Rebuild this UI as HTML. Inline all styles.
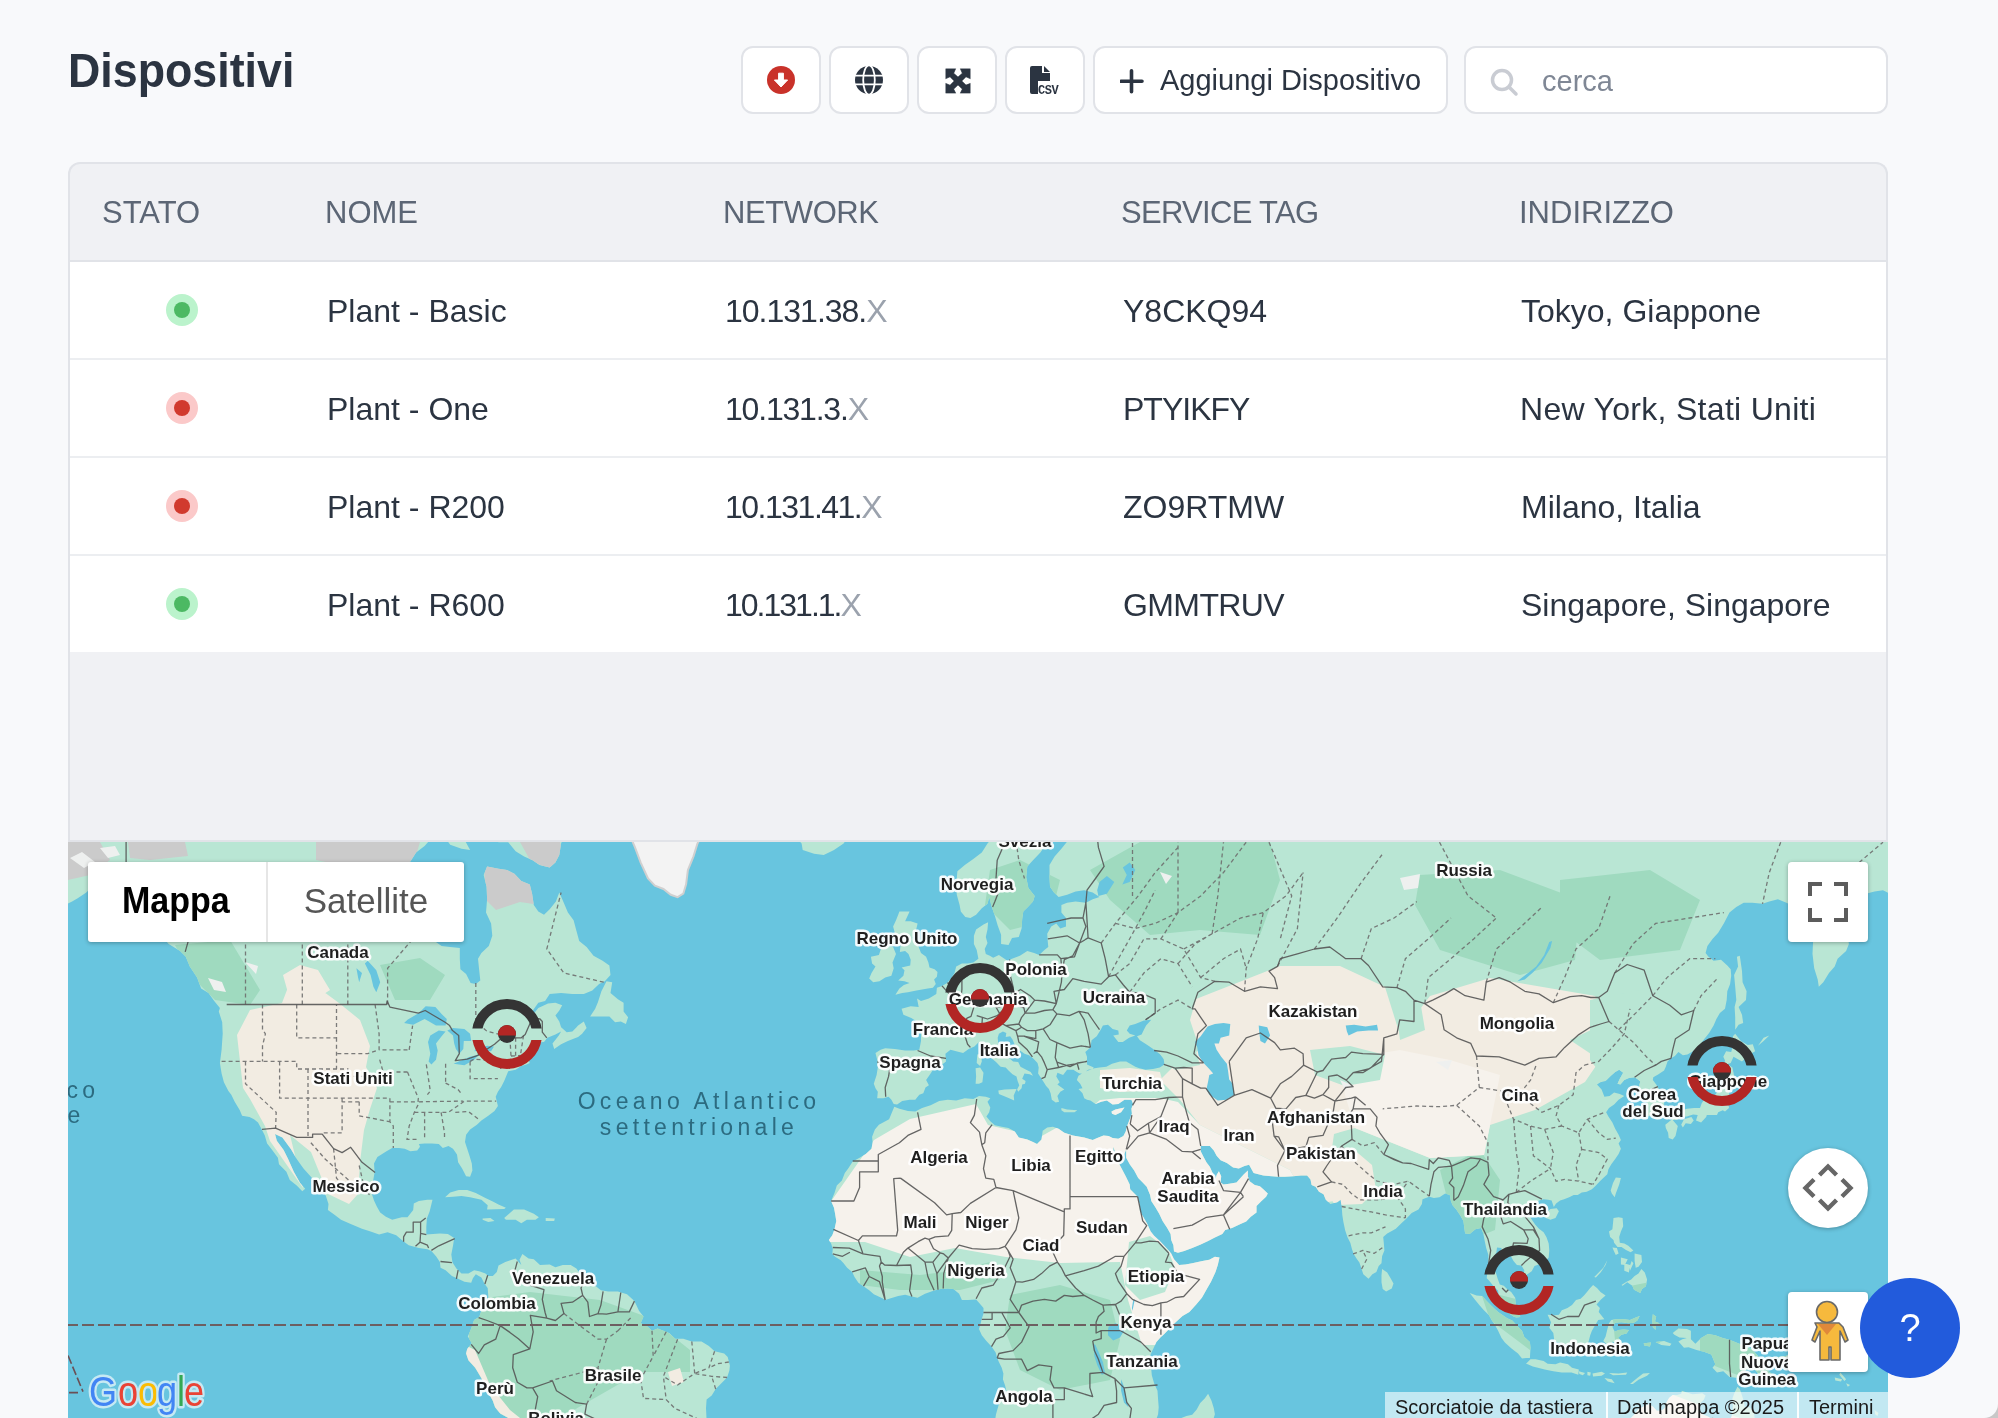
<!DOCTYPE html>
<html><head><meta charset="utf-8">
<style>
*{box-sizing:border-box}
html,body{margin:0;padding:0}
body{width:1998px;height:1418px;overflow:hidden;position:relative;will-change:transform;background:#f8f9fb;font-family:"Liberation Sans",sans-serif;color:#2b3441}
.abs{position:absolute}
.title{left:68px;top:40px;font-size:48.4px;font-weight:bold;line-height:60px;transform:scaleX(0.925);transform-origin:0 0;color:#2b3441;letter-spacing:0px}
.btn{position:absolute;top:46px;height:68px;background:#fff;border:2px solid #e1e3e8;border-radius:12px}
.ib{width:80px}
.ib svg{position:absolute;left:50%;top:50%;transform:translate(-50%,-50%)}
.add{left:1093px;width:355px}
.add span{position:absolute;left:65px;top:16px;font-size:29px;line-height:32px;color:#2b3441}
.search{left:1464px;width:424px}
.search span{position:absolute;left:76px;top:17px;font-size:29px;line-height:32px;color:#7f8795}
.tbl{position:absolute;left:68px;top:162px;width:1820px;height:680px;background:#f0f1f4;border:2px solid #e1e3e8;border-bottom:none;border-radius:12px 12px 0 0;overflow:hidden}
.th{position:absolute;top:0;left:0;right:0;height:98px;border-bottom:2px solid #e1e3e8}
.th span{position:absolute;top:31px;font-size:31px;line-height:36px;color:#5c6675}
.row{position:absolute;left:0;right:0;height:98px;background:#fff;border-bottom:2px solid #eceef1}
.row span{position:absolute;top:30px;font-size:32px;line-height:38px;color:#2b3441}
.row span i{font-style:normal;color:#9ba2ad}
.dot{position:absolute;left:96px;top:32px;width:32px;height:32px;border-radius:50%}
.dot b{position:absolute;left:8px;top:8px;width:16px;height:16px;border-radius:50%}
.g{background:#bbf3cc}.g b{background:#4cb963}
.r{background:#fbc9c9}.r b{background:#d13a2e}
.tblbot{position:absolute;left:68px;top:840px;width:1820px;height:2px;background:#e1e3e8}
.map{position:absolute;left:68px;top:842px;width:1820px;height:576px;overflow:hidden;background:#68c5df;will-change:transform}
.mtype{left:88px;top:862px;width:376px;height:80px;background:#fff;border-radius:3px;box-shadow:0 1px 4px rgba(0,0,0,.3);overflow:hidden}
.mt1{position:absolute;left:34px;top:0;height:80px;font-size:36px;font-weight:bold;color:#000;line-height:77px;transform:scaleX(0.945);transform-origin:0 0;white-space:nowrap}
.mt2{position:absolute;left:178px;top:0;width:198px;height:80px;font-size:35px;color:#565656;text-align:center;line-height:78px;border-left:2px solid #e6e6e6}
.fs{left:1788px;top:862px;width:80px;height:80px;background:#fff;border-radius:4px;box-shadow:0 1px 4px rgba(0,0,0,.3)}
.pan{left:1788px;top:1148px;width:80px;height:80px;background:#fff;border-radius:50%;box-shadow:0 1px 4px rgba(0,0,0,.3)}
.peg{left:1788px;top:1292px;width:80px;height:80px;background:#fff;border-radius:4px;box-shadow:0 1px 4px rgba(0,0,0,.3)}
.help{left:1860px;top:1278px;width:100px;height:100px;border-radius:50%;background:#225bdc;color:#fff;font-size:38px;text-align:center;line-height:100px}
.foot{left:1385px;top:1392px;width:503px;height:26px;background:rgba(255,255,255,.6)}
.foot span{position:absolute;top:3px;font-size:20px;line-height:24px;color:#1a1a1a;white-space:nowrap}
.foot i{position:absolute;top:0;width:2px;height:26px;background:rgba(255,255,255,.9)}
.glogo{left:80px;top:1370px;width:130px;height:48px}
</style></head>
<body>
<div class="abs title">Dispositivi</div>

<div class="btn ib" style="left:741px"><svg width="30" height="30" viewBox="0 0 30 30"><circle cx="15" cy="15" r="14" fill="#c9322a"/><path d="M12.6 8.2h4.8v6.8h4.2L15 22l-6.6-7h4.2z" fill="#fff" stroke="#fff" stroke-width="1" stroke-linejoin="round"/></svg></div>
<div class="btn ib" style="left:829px"><svg width="30" height="30" viewBox="0 0 30 30" style="margin-top:0"><circle cx="15" cy="15" r="14" fill="#2b3441"/><g fill="none" stroke="#fff" stroke-width="1.8"><path d="M0 10.6h30M0 19.4h30"/><ellipse cx="15" cy="15" rx="5.8" ry="14.6"/></g></svg></div>
<div class="btn ib" style="left:917px"><svg width="25" height="25" viewBox="0 0 24.4 24.2" style="margin-left:0.5px;margin-top:0.5px"><path d="M0 0H10L8 4.5L12.2 8.3L16.4 4.5L14.4 0H24.4V10L20 8L15.9 12.1L20 16.1L24.4 14.4V24.1H14.4L16.4 20L12.2 15.9L8 20L10 24.1H0V14.4L4.4 16.2L8.5 12.1L4.4 8L0 10Z" fill="#2b3441" stroke="#2b3441" stroke-width="0.6" stroke-linejoin="round"/></svg></div>
<div class="btn ib" style="left:1005px"><svg width="32" height="30" viewBox="0 0 32 30"><path d="M1 3a2 2 0 0 1 2-2h10v7h8v8H9v13H3a2 2 0 0 1-2-2z" fill="#2b3441"/><path d="M15 1l6 6h-6z" fill="#2b3441"/><text x="9" y="29" font-family="Liberation Mono" font-weight="bold" font-size="12" fill="#2b3441" letter-spacing="-0.5">CSV</text></svg></div>

<div class="btn add"><svg class="abs" style="left:25px;top:21px" width="25" height="25" viewBox="0 0 25 25"><path d="M11.5 1.8v21M1 12.3h21" stroke="#2b3441" stroke-width="3.6" stroke-linecap="round"/></svg><span>Aggiungi Dispositivo</span></div>
<div class="btn search"><svg class="abs" style="left:22px;top:18px" width="32" height="32" viewBox="0 0 32 32"><circle cx="14" cy="14" r="9.5" fill="none" stroke="#c9ccd3" stroke-width="3.5"/><path d="M21 21l7 7" stroke="#c9ccd3" stroke-width="3.5" stroke-linecap="round"/></svg><span>cerca</span></div>

<div class="tbl">
  <div class="th">
    <span style="left:32px">STATO</span>
    <span style="left:255px">NOME</span>
    <span style="left:653px;letter-spacing:-0.4px">NETWORK</span>
    <span style="left:1051px;letter-spacing:-0.7px">SERVICE TAG</span>
    <span style="left:1449px">INDIRIZZO</span>
  </div>
  <div class="row" style="top:98px"><div class="dot g"><b></b></div><span style="left:257px">Plant - Basic</span><span style="left:655px;letter-spacing:-1px">10.131.38.<i>X</i></span><span style="left:1053px">Y8CKQ94</span><span style="left:1451px">Tokyo, Giappone</span></div>
  <div class="row" style="top:196px"><div class="dot r"><b></b></div><span style="left:257px">Plant - One</span><span style="left:655px;letter-spacing:-1.2px">10.131.3.<i>X</i></span><span style="left:1053px;letter-spacing:-1px">PTYIKFY</span><span style="left:1450px;letter-spacing:0.3px">New York, Stati Uniti</span></div>
  <div class="row" style="top:294px"><div class="dot r"><b></b></div><span style="left:257px">Plant - R200</span><span style="left:655px;letter-spacing:-1.5px">10.131.41.<i>X</i></span><span style="left:1053px">ZO9RTMW</span><span style="left:1451px">Milano, Italia</span></div>
  <div class="row" style="top:392px;height:96px;border-bottom:none"><div class="dot g"><b></b></div><span style="left:257px">Plant - R600</span><span style="left:655px;letter-spacing:-2px">10.131.1.<i>X</i></span><span style="left:1053px;letter-spacing:-0.6px">GMMTRUV</span><span style="left:1451px">Singapore, Singapore</span></div>
</div>
<div class="tblbot"></div>

<div class="map" id="map">
<!--MAP--><svg width="1820" height="576" viewBox="0 0 1820 576" style="position:absolute;left:0;top:0;display:block">
<defs><clipPath id="lc"><path d="M-50.0 -82.4L-50.0 48.2L-1.6 44.7L-3.3 62.9L4.1 59.6L9.7 56.2L18.3 50.5L24.0 44.7L32.5 49.4L41.0 53.9L55.2 56.2L66.6 58.5L75.1 66.2L83.7 73.9L86.5 83.5L93.3 93.8L100.7 102.0L112.1 108.9L117.8 114.8L121.8 124.4L129.1 135.6L133.1 146.6L140.5 151.1L146.2 159.0L151.9 165.9L150.8 169.4L154.2 180.3L154.7 191.8L153.6 207.8L151.9 220.9L153.6 231.5L155.9 240.3L160.4 249.1L163.3 252.7L166.7 259.8L171.8 268.2L174.1 273.8L181.5 275.1L186.0 277.2L190.0 280.6L193.4 286.7L196.8 293.4L199.1 301.4L203.6 307.3L209.9 315.8L211.0 322.2L218.4 329.8L221.8 338.0L228.7 343.6L234.3 349.2L237.2 346.7L232.1 341.1L225.8 329.8L220.1 317.0L215.6 308.0L208.8 298.8L207.0 292.1L214.4 295.4L223.0 307.3L228.7 317.0L235.5 326.6L242.9 334.8L250.3 343.6L257.7 353.5L260.5 362.0L259.9 368.1L266.8 372.9L273.0 377.7L282.7 381.9L294.0 386.7L302.6 389.6L311.1 392.6L319.6 390.2L328.2 393.2L335.0 399.1L340.7 403.2L350.9 406.1L359.4 407.3L363.4 409.0L368.0 414.3L371.9 420.1L372.5 425.8L377.6 428.2L383.9 433.9L389.0 436.2L396.4 439.7L403.2 440.8L404.9 436.2L407.8 432.2L413.4 435.6L416.3 441.4L419.7 446.0L420.3 454.5L419.1 461.4L413.4 468.8L411.2 475.0L406.1 477.9L404.4 483.0L402.6 488.1L399.8 494.4L403.8 501.2L399.2 506.9L398.1 511.5L400.4 518.3L407.2 525.8L411.7 533.2L416.3 541.3L420.3 550.6L424.8 558.7L427.1 565.2L432.2 571.6L439.0 575.2L444.7 578.7L450.4 599.1L638.0 599.1L638.6 578.1L638.0 566.3L638.6 557.6L643.7 553.5L647.7 547.1L653.4 541.3L659.1 535.5L661.4 528.6L661.9 523.5L659.7 514.9L656.2 511.5L646.6 509.2L640.9 504.1L633.5 499.5L623.8 499.5L615.3 496.7L607.3 496.7L601.1 491.0L589.7 486.4L584.0 488.7L578.3 483.6L572.7 481.3L575.5 474.5L571.0 468.8L566.4 459.1L559.0 452.2L549.9 449.4L540.2 449.4L532.9 448.2L527.2 443.7L519.2 435.6L513.0 433.3L508.4 426.4L502.7 423.0L494.8 423.0L487.4 425.3L481.7 422.4L472.0 423.0L465.8 417.2L460.6 416.6L454.4 411.9L451.5 417.7L453.3 423.0L447.6 416.6L442.4 418.3L437.3 420.1L430.5 423.5L428.8 429.9L424.8 433.9L420.3 433.9L417.4 431.6L411.2 429.3L406.1 428.2L400.4 431.6L393.5 431.6L388.4 426.4L384.5 420.6L383.3 412.5L385.0 403.8L386.2 396.1L379.9 392.0L371.9 391.4L365.1 392.0L358.3 392.6L358.3 384.9L358.9 376.5L361.7 369.3L364.5 357.8L359.4 357.8L350.9 359.0L345.8 361.4L345.2 368.1L339.5 375.3L333.8 375.3L324.2 377.7L317.9 374.7L312.2 370.5L308.8 364.5L306.0 358.4L303.7 351.6L304.8 340.5L306.6 330.4L306.0 321.5L309.4 315.1L318.5 309.3L324.2 306.0L331.0 306.0L336.7 306.7L342.4 309.3L349.2 308.6L352.0 304.7L350.9 302.1L356.6 301.4L364.0 301.4L370.8 302.1L374.8 306.0L380.5 304.0L385.0 306.7L389.0 312.5L390.1 320.3L394.1 326.6L398.1 334.2L402.1 334.8L404.4 328.5L403.8 321.5L401.5 313.8L399.2 306.7L397.0 300.1L398.1 292.8L402.1 287.4L408.9 282.7L413.4 278.6L420.3 273.8L426.5 268.9L429.9 264.0L427.7 254.8L429.9 249.8L433.3 244.7L436.2 238.9L439.0 232.2L440.2 229.2L447.6 227.7L453.3 223.9L458.4 222.4L461.8 220.9L458.4 214.8L457.2 210.1L461.8 205.4L468.6 200.6L476.0 199.9L479.4 195.8L487.4 192.6L493.1 189.4L490.8 193.4L484.5 201.4L486.2 207.0L493.1 202.2L499.9 199.1L510.1 195.0L514.1 191.8L518.6 186.1L515.8 179.5L510.1 183.6L504.4 189.4L498.7 190.2L493.1 185.3L491.3 179.5L487.4 173.6L491.3 168.5L494.2 163.3L487.4 160.7L480.0 161.6L470.3 165.9L462.9 175.3L458.9 177.0L464.1 169.4L470.3 160.7L477.1 159.0L481.7 151.9L493.1 151.1L504.4 151.9L515.8 151.9L524.3 148.4L531.1 142.1L536.8 139.3L542.5 132.9L541.4 123.5L534.6 118.7L525.5 113.8L518.6 105.0L511.2 98.9L508.4 88.7L505.6 78.2L499.9 70.6L494.8 58.5L491.3 50.5L487.9 59.6L481.7 67.3L476.0 72.8L470.3 69.5L465.8 62.9L464.1 51.7L461.8 42.4L453.3 38.9L446.4 31.7L439.0 28.0L430.5 26.8L419.1 24.4L415.7 32.9L418.6 44.7L419.1 57.3L418.0 70.6L423.1 81.4L424.3 93.8L420.8 104.0L413.4 110.9L410.0 116.7L411.2 128.2L412.3 138.4L407.8 142.1L402.6 141.1L398.1 131.9L392.4 127.2L391.8 116.7L391.8 106.0L382.2 105.0L373.6 104.0L365.1 97.9L356.6 91.8L348.1 86.6L339.5 85.6L332.7 86.6L328.2 74.9L323.6 67.3L321.9 53.9L323.6 40.0L329.3 30.5L335.6 23.1L342.4 19.4L348.1 10.6L356.6 4.1L362.3 -2.5L368.0 -21.5L370.8 -82.4ZM507.3 -82.4L510.1 -28.6L504.4 -16.0L497.0 -7.8L493.1 1.5L491.3 13.1L487.4 20.6L481.7 25.6L471.4 23.1L464.6 18.2L456.1 14.4L447.6 9.3L440.2 0.2L430.5 0.2L422.0 -5.1L415.2 -7.8L413.4 -21.5L410.6 -82.4ZM368.0 -21.5L373.6 -9.2L382.2 2.8L393.5 6.7L402.1 8.0L396.4 -2.5L387.9 -18.7L382.2 -21.5ZM721.6 -21.5L731.9 -11.9L726.2 -6.5L733.6 1.5L734.7 8.0L746.1 11.8L755.7 13.1L766.0 8.0L775.6 1.5L782.5 -7.8L781.3 -16.0L780.2 -21.5ZM522.1 174.4L527.2 166.8L530.0 159.9L533.4 149.3L538.5 139.3L544.2 140.2L542.5 151.1L549.9 157.2L555.6 160.7L555.6 169.4L560.1 175.3L557.9 182.0L552.8 179.5L547.1 180.3L541.4 174.4L532.9 174.4L525.5 174.4ZM377.1 355.3L382.2 350.4L390.7 347.9L399.2 347.9L407.8 351.0L417.4 355.9L424.8 359.6L430.5 362.6L437.9 365.7L436.2 366.9L419.1 367.5L419.7 363.3L413.4 357.8L402.1 355.3L393.5 354.1L385.0 354.7ZM436.2 375.9L445.9 367.5L456.1 367.5L465.8 371.7L470.9 375.3L467.5 377.7L458.9 377.7L453.3 381.3L447.6 377.7L437.9 377.7ZM414.6 376.5L422.5 375.9L426.5 378.9L420.3 380.1L414.6 377.7ZM477.7 375.9L486.8 376.5L486.2 378.9L477.7 378.9ZM928.0 -82.4L936.6 -21.5L932.6 -14.6L925.2 -5.1L919.5 1.5L913.8 10.6L905.3 16.9L896.8 23.1L889.4 29.3L888.2 42.4L888.8 52.8L891.6 62.9L892.8 69.5L897.3 74.9L902.4 76.0L908.1 72.8L913.8 66.2L919.5 61.8L921.2 55.1L923.5 64.0L926.9 73.9L929.7 83.5L933.1 92.8L933.1 102.0L940.5 103.0L944.0 95.9L950.8 94.9L953.6 86.6L954.2 77.1L955.3 69.5L959.9 65.1L965.0 59.6L966.7 53.9L960.4 45.9L958.2 35.3L959.3 24.4L965.0 18.2L972.4 10.6L978.6 1.5L982.0 -6.5L984.9 -14.6L993.4 -18.7L1000.8 -16.0L1003.7 -7.8L1000.8 -2.5L993.4 6.7L986.6 14.4L981.5 23.1L981.5 35.3L982.0 44.7L986.0 50.5L990.6 55.1L999.1 52.8L1007.6 49.4L1016.2 48.2L1024.7 50.5L1031.5 55.1L1024.7 57.3L1017.9 60.7L1007.6 59.6L999.1 60.7L993.4 62.9L993.4 70.6L998.0 76.0L998.0 84.5L992.3 86.6L988.3 81.4L983.2 84.5L979.2 91.8L979.8 99.9L980.3 105.0L976.4 107.9L971.2 112.9L966.1 110.9L959.3 108.9L951.9 113.8L944.0 116.7L939.4 118.7L930.9 112.9L925.2 115.8L921.8 113.8L917.8 111.9L916.7 107.0L919.5 101.0L917.8 94.9L919.5 87.6L920.1 80.3L915.5 82.4L908.1 87.6L905.9 93.8L905.9 102.0L908.7 107.9L910.4 116.7L905.3 120.6L899.6 121.6L893.9 121.6L888.2 124.4L886.5 131.0L883.1 136.6L879.1 141.1L874.0 143.9L868.9 145.7L868.3 151.9L860.9 156.4L853.0 159.0L849.0 156.4L850.7 165.1L842.7 164.2L833.6 166.8L835.4 172.8L843.3 176.1L847.3 178.6L849.6 183.6L853.0 189.4L853.0 199.1L851.3 207.8L845.6 208.5L837.1 208.5L826.8 207.0L817.2 206.2L812.6 207.8L807.5 210.9L809.2 217.8L809.8 225.5L808.6 233.0L805.8 241.8L807.5 246.2L809.8 249.8L809.2 256.2L815.4 256.2L820.6 254.8L823.4 257.7L825.7 261.9L829.1 262.6L834.2 259.1L841.6 257.7L847.3 257.7L851.3 252.7L855.3 251.2L857.5 245.5L860.9 243.3L858.1 238.1L862.1 232.2L865.5 227.0L872.3 223.9L878.0 219.4L877.4 211.7L882.5 207.8L888.2 209.3L895.1 210.9L900.7 207.0L906.4 204.6L910.4 200.6L915.5 203.0L918.4 207.8L920.1 212.4L923.5 216.3L928.0 220.1L932.6 224.7L937.7 225.5L940.5 228.5L944.5 232.2L948.5 234.4L949.6 238.9L951.3 243.3L949.1 247.6L950.2 249.8L953.6 246.2L954.2 242.5L957.0 241.8L957.6 238.9L954.2 236.7L956.5 231.5L961.6 232.2L965.0 233.7L962.7 230.0L958.2 227.7L952.5 224.7L950.2 220.1L945.1 219.4L940.5 215.5L937.1 207.8L930.3 202.2L929.7 195.8L930.9 191.8L934.9 189.4L938.3 191.0L937.7 195.0L942.2 194.2L944.5 197.5L946.8 203.0L950.8 207.8L956.5 211.7L961.0 213.2L965.0 216.3L969.5 220.9L970.7 225.5L970.1 231.5L973.5 236.7L975.8 240.3L978.1 244.0L980.9 246.9L982.6 251.2L983.8 257.7L987.7 260.5L991.1 259.8L989.4 254.1L992.3 249.8L996.3 247.6L989.4 242.5L991.7 240.3L988.3 234.4L989.4 230.7L995.1 233.0L999.1 227.7L1005.4 227.7L1008.8 230.0L1011.6 231.5L1015.0 231.5L1020.1 227.7L1024.7 227.0L1025.8 225.5L1019.0 222.4L1019.0 214.8L1017.3 210.1L1022.4 205.4L1023.6 198.3L1028.7 194.2L1032.7 187.7L1034.9 183.6L1040.0 182.8L1044.6 186.9L1050.3 188.6L1050.8 192.6L1045.2 193.4L1050.3 199.9L1054.8 199.9L1061.1 195.8L1067.3 193.4L1061.7 191.8L1058.8 188.6L1061.7 183.6L1067.3 182.0L1075.9 178.6L1083.3 177.8L1078.1 183.6L1075.9 187.7L1073.6 192.6L1069.0 194.2L1071.9 198.3L1077.0 201.4L1081.6 204.6L1087.2 208.5L1092.4 212.4L1095.8 217.1L1096.3 222.4L1091.8 225.5L1085.0 227.0L1077.6 227.7L1071.3 226.2L1067.3 224.7L1062.2 221.7L1058.2 219.4L1052.0 219.4L1044.0 221.7L1038.3 224.7L1031.5 225.5L1026.4 226.2L1016.2 230.0L1010.5 233.7L1008.8 238.1L1012.2 241.8L1014.5 246.2L1010.5 246.9L1014.5 251.2L1016.2 256.2L1019.0 257.7L1022.4 258.4L1027.5 261.9L1033.2 259.8L1038.9 258.4L1044.6 262.6L1050.3 261.9L1056.5 257.7L1063.4 257.7L1065.1 261.9L1063.4 266.8L1063.9 271.7L1061.7 277.2L1059.4 283.3L1057.7 289.4L1055.4 294.1L1050.3 296.8L1044.6 296.1L1040.6 294.1L1035.5 293.4L1029.2 296.1L1024.7 298.1L1016.2 295.4L1004.8 293.4L996.3 290.8L990.6 286.7L984.9 284.7L979.2 285.4L974.7 288.8L973.5 297.4L969.0 302.1L965.0 300.1L959.3 297.4L950.8 295.4L946.8 289.4L940.5 286.1L933.7 284.7L926.9 283.3L922.3 279.3L918.4 274.5L921.2 270.3L922.3 265.4L919.5 259.8L922.3 256.2L917.8 254.8L911.0 254.1L905.3 257.0L896.8 256.2L888.2 258.4L879.7 257.7L871.2 259.1L862.6 263.3L854.1 266.1L847.3 269.6L839.9 268.9L831.4 266.8L826.3 264.7L824.0 270.3L821.1 277.2L816.0 279.9L810.9 282.7L806.9 287.4L804.1 294.8L804.6 300.7L803.5 306.7L797.8 311.9L791.6 315.8L784.7 319.6L780.2 326.6L776.8 331.1L773.9 338.6L768.8 343.6L766.5 351.0L763.1 359.0L766.0 365.7L767.1 371.7L768.3 378.9L766.5 387.3L764.3 393.2L760.9 397.9L763.1 401.4L764.8 406.7L764.3 411.9L767.1 414.8L772.8 418.3L775.6 421.2L779.1 425.8L784.2 429.9L786.5 435.1L790.4 440.8L795.5 444.2L801.2 448.2L805.8 452.2L814.3 456.2L817.2 458.0L822.8 456.2L830.2 454.0L837.1 452.8L843.9 454.5L849.6 455.7L857.0 451.7L865.5 448.8L872.3 447.1L879.7 446.5L885.4 447.1L891.1 451.7L893.9 458.0L899.6 458.0L908.1 457.4L911.0 460.8L915.5 465.9L915.5 471.6L913.8 476.7L912.7 481.3L911.0 487.0L913.8 493.2L918.4 498.9L923.5 504.6L927.5 510.3L929.2 516.0L930.9 520.0L933.7 525.8L935.4 531.5L934.9 537.3L937.1 543.6L938.3 548.8L936.6 554.6L931.4 560.5L929.7 566.3L928.0 572.2L926.9 579.3L925.2 599.1L1087.2 599.1L1082.7 581.1L1088.4 577.0L1090.1 572.2L1090.7 565.2L1090.1 557.6L1089.5 548.8L1086.1 541.3L1083.8 533.2L1083.3 527.5L1081.0 520.6L1081.6 514.9L1083.3 510.9L1085.5 506.3L1088.4 500.1L1092.4 495.5L1096.3 492.1L1101.5 486.4L1107.1 480.7L1114.5 473.9L1121.4 469.9L1128.2 462.5L1133.9 455.7L1138.4 447.7L1143.0 439.7L1147.5 429.9L1149.8 423.0L1151.5 415.4L1146.9 414.8L1141.3 417.7L1134.4 418.9L1124.2 421.2L1117.4 422.4L1111.1 423.0L1106.0 417.2L1103.2 411.4L1100.3 407.9L1096.3 403.8L1091.8 399.1L1086.1 393.8L1082.7 389.6L1079.3 381.9L1075.9 375.9L1071.9 369.3L1071.3 361.4L1069.6 354.7L1062.2 347.3L1061.7 342.4L1057.7 334.2L1053.1 325.4L1050.3 320.3L1045.7 313.8L1045.2 304.7L1048.6 313.8L1053.1 319.0L1055.4 315.1L1058.2 307.3L1058.2 315.8L1061.7 322.2L1066.2 328.5L1070.2 336.1L1074.7 340.5L1078.7 344.8L1082.1 352.9L1083.3 359.0L1087.2 365.1L1091.2 371.7L1094.6 378.9L1099.2 386.1L1102.6 392.0L1103.2 397.9L1105.4 403.2L1106.0 409.6L1110.0 410.8L1116.2 409.0L1124.2 406.1L1132.7 402.6L1140.1 399.1L1146.9 395.5L1154.3 392.0L1157.2 387.9L1164.0 386.1L1172.5 381.9L1178.2 379.5L1182.8 374.7L1188.5 370.5L1188.5 363.9L1193.0 359.6L1198.1 354.7L1199.8 351.6L1195.3 347.3L1191.9 344.2L1186.7 343.0L1181.6 339.2L1179.9 334.2L1179.9 328.5L1175.9 332.3L1172.5 336.1L1168.5 340.5L1161.2 341.7L1155.5 342.4L1152.6 340.5L1153.2 334.2L1150.9 329.2L1148.6 333.0L1147.5 337.4L1144.1 329.8L1141.8 324.7L1138.4 320.3L1135.6 315.1L1132.7 309.3L1132.7 304.0L1136.7 304.0L1141.8 304.0L1145.8 308.6L1148.6 313.8L1152.6 318.3L1158.9 320.9L1165.1 325.4L1170.8 326.6L1176.5 324.1L1181.1 322.8L1185.6 331.1L1195.3 333.6L1203.8 334.2L1210.1 334.8L1216.9 334.8L1225.4 334.2L1232.8 333.6L1239.1 333.6L1242.5 337.4L1243.6 343.0L1247.6 344.8L1251.0 349.8L1255.5 352.3L1257.8 357.8L1262.4 362.0L1269.2 360.2L1272.6 357.8L1273.7 364.5L1274.3 372.9L1275.4 380.1L1277.2 388.4L1279.4 394.9L1282.3 400.8L1284.0 407.3L1285.7 411.9L1288.5 416.6L1291.4 420.6L1293.6 427.0L1295.3 432.2L1300.5 436.8L1304.4 432.2L1308.4 429.9L1310.7 424.1L1313.5 421.2L1314.1 414.3L1316.4 408.4L1315.8 400.8L1315.2 394.9L1319.2 391.4L1323.8 389.0L1327.8 386.7L1333.4 381.3L1338.0 377.1L1343.7 371.1L1350.5 367.5L1353.9 362.0L1354.5 357.2L1361.3 354.7L1365.9 355.9L1371.5 355.3L1377.2 351.6L1381.8 352.9L1382.9 359.0L1384.6 363.3L1388.6 368.1L1392.0 372.9L1395.4 378.9L1396.6 387.9L1397.1 391.4L1401.7 392.0L1407.4 387.3L1413.0 386.1L1415.3 391.4L1416.5 397.9L1418.2 406.1L1420.4 413.1L1420.4 423.0L1419.3 430.5L1418.7 436.2L1421.0 438.5L1425.6 444.2L1430.1 448.8L1430.7 454.5L1432.9 461.4L1435.8 467.1L1439.8 470.5L1445.5 474.5L1448.3 475.6L1452.3 475.0L1450.6 468.8L1447.7 462.5L1447.2 455.7L1443.2 450.0L1439.8 447.7L1435.8 443.7L1431.8 442.5L1429.5 436.2L1427.8 430.5L1423.9 427.0L1423.9 420.6L1425.6 415.4L1428.4 410.2L1429.0 405.5L1433.5 406.1L1433.5 410.8L1438.1 410.8L1442.6 413.7L1445.5 418.9L1448.9 423.0L1453.4 423.5L1456.3 428.2L1455.7 433.9L1458.0 433.3L1463.7 429.3L1466.5 424.1L1472.8 421.8L1478.4 418.3L1480.7 415.4L1481.3 408.4L1480.7 401.4L1478.4 394.9L1475.6 390.2L1471.0 386.7L1467.1 382.5L1464.2 378.3L1461.4 374.1L1461.4 369.3L1463.7 365.7L1466.5 362.6L1471.0 358.4L1475.6 357.2L1480.1 357.8L1483.6 358.4L1485.8 365.1L1488.1 361.4L1492.1 358.4L1496.1 357.2L1501.2 355.3L1505.7 352.9L1509.7 352.9L1513.7 350.4L1518.8 349.8L1523.9 347.3L1527.9 343.6L1531.9 339.2L1535.3 336.1L1539.3 332.3L1540.4 327.3L1543.3 322.2L1547.2 317.0L1550.6 311.9L1552.9 306.7L1550.6 301.4L1552.9 298.1L1550.6 292.8L1547.2 286.7L1544.4 280.6L1540.4 274.5L1538.1 270.3L1541.0 266.1L1546.1 262.6L1550.6 257.7L1556.3 254.1L1551.8 252.0L1546.1 250.5L1541.6 254.1L1536.4 254.8L1533.6 247.6L1529.0 242.5L1532.5 240.3L1537.6 238.9L1542.1 234.4L1547.2 230.0L1551.2 227.7L1555.2 230.7L1551.8 236.7L1549.5 241.8L1552.4 242.5L1556.3 238.1L1560.9 235.9L1566.6 235.2L1570.0 237.4L1572.3 239.6L1571.1 244.0L1570.5 249.8L1575.1 251.2L1579.1 252.0L1579.6 256.2L1578.5 261.2L1580.2 266.1L1578.5 272.4L1580.8 274.5L1584.8 272.4L1589.9 271.0L1594.4 268.9L1596.1 264.7L1596.1 258.4L1595.0 252.7L1591.0 246.9L1588.2 242.5L1584.8 238.1L1585.3 235.2L1590.5 232.2L1596.1 228.5L1597.8 224.7L1599.5 219.4L1603.0 216.3L1606.9 214.0L1610.4 210.1L1614.9 213.2L1619.4 212.4L1626.3 208.5L1631.4 203.8L1636.5 196.7L1641.1 191.0L1645.6 183.6L1648.4 177.0L1651.9 171.1L1657.0 166.8L1658.7 158.1L1659.3 149.3L1662.1 142.1L1663.2 133.8L1662.7 127.2L1659.3 123.5L1653.0 117.7L1645.6 118.7L1640.5 114.8L1637.6 110.9L1639.4 104.0L1644.5 96.9L1650.2 90.8L1655.8 81.4L1661.5 70.6L1668.3 65.1L1675.7 60.7L1684.3 60.7L1694.5 61.8L1701.3 59.6L1709.9 57.3L1718.4 60.7L1726.9 65.1L1735.4 62.9L1741.1 59.6L1738.3 51.7L1744.0 44.7L1751.4 36.5L1755.3 32.9L1763.9 32.9L1771.3 40.0L1768.4 47.0L1762.7 56.2L1755.3 70.6L1750.2 78.2L1746.8 86.6L1745.1 98.9L1744.5 111.9L1746.2 126.3L1749.7 137.5L1750.8 144.8L1755.3 140.2L1761.0 131.0L1766.7 124.4L1769.6 116.7L1778.1 108.9L1780.9 102.0L1779.8 94.9L1785.5 89.7L1787.8 81.4L1782.1 76.0L1783.8 70.6L1789.5 61.8L1792.3 55.1L1798.0 51.7L1806.5 49.4L1815.0 48.2L1826.4 53.9L1854.8 53.9L1854.8 -82.4ZM831.4 69.5L841.6 69.5L837.1 79.2L842.7 79.2L849.6 81.4L847.9 88.7L844.4 95.9L848.4 98.9L850.7 105.0L853.0 110.9L858.1 114.8L860.4 120.6L861.5 125.4L866.6 127.2L869.5 130.1L868.9 134.7L866.1 137.5L867.8 142.1L864.9 145.7L859.8 146.6L854.1 147.5L848.4 148.4L839.9 150.2L834.2 151.1L827.4 152.8L831.4 146.6L835.9 143.0L841.6 141.1L836.5 139.3L830.2 138.4L835.4 133.8L836.5 128.2L833.6 125.4L842.2 123.5L842.7 117.7L840.5 111.9L837.1 108.9L831.9 109.9L832.5 103.0L828.0 104.0L828.5 96.9L826.8 90.8L825.1 84.5L828.0 78.2L830.2 72.8ZM825.1 105.0L818.9 104.0L813.2 106.0L810.9 112.9L802.9 114.8L804.1 121.6L807.5 124.4L803.5 131.0L801.2 136.6L805.2 140.2L811.5 139.3L817.2 135.6L823.4 133.8L825.7 126.3L824.5 120.6L828.0 111.9ZM907.6 226.2L912.1 225.5L915.5 230.7L914.4 240.3L911.0 241.8L907.6 241.8L908.1 234.4ZM909.3 212.4L913.2 211.7L913.8 219.4L912.1 223.9L908.7 220.9ZM930.3 248.4L936.6 247.6L948.5 246.9L945.7 253.4L946.2 258.4L941.1 256.2L930.9 252.0ZM993.4 266.1L999.1 267.5L1009.3 268.2L1006.5 270.3L996.3 270.3L993.4 268.2ZM1043.5 269.6L1047.4 267.5L1056.5 265.4L1053.1 270.3L1047.4 273.1L1044.0 271.7ZM1314.1 427.0L1319.2 430.5L1322.6 436.2L1325.5 441.4L1323.8 446.5L1318.1 449.4L1314.7 447.1L1313.5 440.2L1313.5 433.3ZM1655.8 223.2L1662.7 220.9L1665.5 214.8L1674.0 219.4L1681.4 212.4L1687.1 209.3L1684.8 202.2L1679.7 203.0L1672.9 199.1L1667.2 191.8L1664.9 194.2L1664.9 203.8L1663.2 210.1L1658.1 209.3L1655.3 214.8L1657.0 218.6ZM1655.8 225.5L1661.0 223.2L1664.4 225.5L1666.6 235.9L1666.1 243.3L1661.5 246.9L1661.0 254.8L1660.4 261.9L1661.0 266.1L1657.0 269.6L1654.7 268.2L1650.2 270.3L1649.0 273.1L1644.5 273.1L1638.8 273.1L1638.2 275.1L1633.1 280.6L1628.0 278.6L1629.7 273.1L1625.1 272.4L1618.9 274.5L1613.2 275.1L1608.1 277.9L1604.7 277.9L1609.8 284.0L1607.5 294.1L1604.7 297.4L1600.7 296.1L1600.1 290.8L1597.8 286.1L1597.3 282.7L1600.7 279.9L1604.1 277.2L1606.9 274.5L1612.1 268.9L1618.9 266.8L1626.3 266.1L1632.0 266.1L1633.7 261.2L1637.6 255.5L1640.5 257.7L1646.2 254.1L1649.0 250.5L1653.0 246.9L1654.7 240.3L1655.8 234.4L1655.3 230.0ZM1613.2 282.7L1616.0 277.2L1623.4 275.1L1625.7 278.6L1622.9 282.0L1617.7 281.3L1614.9 285.4ZM1667.2 187.7L1670.6 182.8L1675.2 181.1L1674.0 172.8L1670.6 165.1L1678.0 158.1L1678.6 149.3L1674.6 140.2L1674.0 129.1L1671.8 113.8L1668.9 114.8L1670.1 124.4L1666.1 132.9L1667.2 144.8L1668.3 158.1L1666.6 165.1L1667.2 175.3ZM1690.0 203.8L1695.6 199.1L1701.3 193.4L1695.6 195.8ZM1542.7 348.6L1545.0 341.1L1547.8 335.5L1552.9 336.1L1551.2 342.4L1547.8 351.6L1546.7 355.3L1543.8 351.6ZM1477.3 371.7L1482.4 366.9L1488.7 366.3L1490.9 369.3L1487.5 375.9L1482.4 377.7L1477.9 375.9ZM1545.5 375.9L1550.6 375.3L1554.6 375.9L1555.2 384.3L1552.9 389.6L1551.2 394.9L1551.8 400.8L1556.3 401.4L1560.3 403.8L1565.4 408.4L1562.6 410.2L1558.0 407.9L1553.5 404.9L1549.5 404.9L1546.1 400.8L1545.5 397.9L1542.1 394.9L1541.0 389.6L1544.4 387.3L1545.0 381.3ZM1544.4 405.5L1548.9 406.1L1550.6 411.4L1547.8 413.1L1546.1 409.6ZM1566.6 411.4L1573.4 413.1L1574.0 420.1L1570.5 424.7L1567.7 425.8L1566.6 418.9ZM1552.9 415.4L1559.7 417.2L1556.9 423.0L1552.9 422.4ZM1556.3 421.2L1562.0 423.0L1560.9 430.5L1556.3 428.7ZM1563.7 418.9L1565.4 421.2L1562.0 428.7L1561.5 424.7ZM1553.5 443.1L1558.6 439.7L1563.2 437.4L1566.6 433.9L1570.5 431.6L1573.4 427.0L1576.8 430.5L1579.1 437.4L1577.9 444.2L1574.0 447.1L1572.3 451.1L1566.0 447.7L1564.3 443.7L1559.2 440.2L1554.6 443.7ZM1526.2 435.1L1530.7 430.5L1535.3 425.8L1539.3 418.3L1537.6 423.0L1533.0 429.9L1527.9 435.6ZM1479.6 472.8L1483.0 480.2L1481.3 485.8L1485.3 491.0L1486.4 498.9L1490.9 500.6L1495.5 502.9L1502.3 501.2L1510.8 504.6L1518.2 504.6L1520.5 500.1L1522.2 493.2L1523.9 488.7L1527.9 481.9L1530.2 477.9L1536.4 477.3L1530.7 469.9L1531.9 465.9L1528.5 462.5L1533.0 457.4L1537.6 453.4L1532.5 450.0L1529.0 446.0L1525.1 443.1L1522.2 446.0L1519.4 449.4L1516.0 453.4L1512.6 456.8L1508.0 458.0L1504.0 463.1L1499.5 465.9L1493.8 468.2L1490.9 472.8L1486.4 473.3ZM1401.7 451.1L1408.5 453.4L1414.2 454.0L1418.7 459.1L1423.9 464.2L1430.1 469.9L1434.1 472.8L1439.2 476.2L1444.3 478.5L1448.9 483.6L1454.0 488.7L1456.3 494.9L1461.9 500.1L1462.5 505.8L1461.9 516.0L1458.0 516.0L1454.0 516.6L1450.0 511.5L1443.2 506.3L1436.9 500.6L1433.5 496.1L1430.1 488.7L1426.7 482.4L1423.9 478.5L1421.0 473.3L1415.9 468.2L1411.3 463.1L1406.8 457.4ZM1458.0 521.8L1462.5 517.2L1467.6 517.2L1475.6 518.9L1479.6 521.8L1487.5 522.3L1492.1 520.6L1500.0 522.3L1504.0 525.8L1510.8 527.5L1510.3 532.7L1503.5 530.4L1493.8 530.4L1485.3 529.2L1476.7 527.5L1469.9 525.8L1464.8 524.6L1459.7 522.3ZM1510.8 529.2L1517.1 530.9L1514.8 533.2L1511.4 532.1ZM1519.4 529.8L1522.8 530.4L1522.2 533.8L1519.4 533.2ZM1524.5 531.5L1533.6 529.8L1537.0 531.5L1533.6 533.8L1525.1 534.4ZM1541.0 530.9L1550.6 531.5L1559.2 530.4L1558.0 532.7L1545.0 533.2ZM1536.4 536.1L1543.8 537.3L1546.7 541.3L1539.8 539.6ZM1562.0 541.9L1567.7 537.3L1575.1 531.5L1581.9 530.9L1579.1 533.8L1570.5 537.8L1564.9 541.9ZM1538.7 514.3L1539.8 507.5L1538.7 502.3L1535.3 498.9L1537.6 494.4L1539.3 487.5L1541.0 481.3L1543.3 477.9L1547.8 477.3L1556.3 477.3L1562.0 477.9L1567.7 475.6L1571.7 473.9L1569.4 478.5L1566.0 480.7L1560.3 481.3L1553.5 480.2L1547.2 480.7L1544.4 484.7L1546.7 489.8L1550.6 488.1L1555.8 487.5L1560.9 488.1L1558.6 491.5L1553.5 492.7L1550.1 495.5L1553.5 500.1L1556.3 504.6L1559.7 507.5L1556.9 510.9L1552.4 510.3L1550.6 506.9L1547.8 501.2L1544.4 499.5L1544.4 505.8L1545.0 514.3ZM1584.8 472.2L1588.2 474.5L1587.0 479.6L1591.6 481.3L1587.6 484.1L1587.6 488.1L1584.8 485.3L1584.2 477.9ZM1587.6 500.1L1596.1 498.9L1603.5 501.8L1601.8 504.1L1593.3 502.9ZM1575.7 501.2L1583.1 500.6L1581.9 504.6L1576.2 503.5ZM1604.7 491.0L1610.4 486.4L1618.9 487.0L1622.9 488.7L1622.9 497.2L1627.4 501.8L1633.1 496.1L1639.9 492.1L1647.3 493.2L1654.7 496.1L1661.5 497.8L1670.1 501.2L1678.6 504.6L1684.3 507.5L1688.8 512.6L1692.8 517.2L1699.1 518.3L1700.8 521.8L1696.8 525.8L1701.3 529.8L1707.0 534.4L1708.7 537.8L1713.8 541.9L1707.0 541.9L1698.5 540.2L1692.8 534.4L1687.1 528.1L1681.4 525.8L1675.7 529.8L1674.6 534.4L1670.1 536.1L1661.5 535.0L1655.3 529.2L1649.0 530.4L1644.5 525.8L1647.3 522.3L1643.3 512.6L1635.9 509.8L1628.5 508.0L1620.6 505.2L1616.0 505.8L1610.4 499.5L1614.3 497.2L1618.9 496.1L1611.5 495.5L1606.4 492.7ZM1703.0 514.9L1709.9 514.9L1717.2 514.3L1722.4 510.9L1725.8 512.6L1721.2 517.2L1712.7 518.9L1704.2 517.8ZM1717.2 498.9L1724.1 501.8L1730.9 508.6L1728.1 509.2L1721.2 502.9ZM1741.1 514.3L1746.2 520.0L1744.0 522.3L1740.0 516.6ZM1749.7 522.9L1761.0 527.5L1759.3 529.2L1750.2 525.8ZM1766.7 535.5L1774.1 537.3L1773.0 539.6L1767.3 538.4ZM1772.4 530.4L1778.1 537.3L1776.4 539.0L1771.3 532.7ZM1778.1 541.3L1782.1 543.0L1779.8 544.8ZM1806.5 568.1L1810.5 571.1L1809.4 574.0L1807.1 572.2ZM1542.1 599.1L1554.6 587.1L1559.2 578.1L1562.6 576.4L1566.6 572.2L1570.5 566.9L1575.7 564.6L1580.8 562.2L1584.8 564.6L1588.7 568.7L1593.3 568.7L1596.7 566.3L1598.4 560.5L1601.3 555.8L1604.7 552.9L1609.2 552.9L1613.2 551.7L1613.8 548.8L1618.9 550.6L1624.6 552.3L1630.3 551.7L1634.2 551.2L1637.6 553.5L1635.9 557.6L1632.5 561.1L1630.3 568.1L1634.2 572.2L1639.9 574.6L1645.6 578.1L1651.3 582.9L1658.1 584.7L1661.0 581.1L1663.8 574.0L1664.9 564.6L1664.4 556.4L1666.6 550.6L1669.5 544.8L1671.8 547.1L1674.0 553.5L1675.7 558.7L1676.9 565.2L1681.4 565.2L1686.0 569.3L1686.5 575.2L1689.4 581.1L1690.0 599.1ZM1140.1 551.7L1143.5 558.7L1145.8 566.3L1146.9 572.2L1144.1 581.1L1141.3 593.1L1110.0 593.1L1110.0 581.1L1112.3 576.4L1118.5 574.0L1124.2 572.8L1128.7 567.5L1132.2 561.1L1136.7 556.4Z"/></clipPath></defs>
<rect width="1820" height="576" fill="#68c5df"/>
<path d="M-50.0 -82.4L-50.0 48.2L-1.6 44.7L-3.3 62.9L4.1 59.6L9.7 56.2L18.3 50.5L24.0 44.7L32.5 49.4L41.0 53.9L55.2 56.2L66.6 58.5L75.1 66.2L83.7 73.9L86.5 83.5L93.3 93.8L100.7 102.0L112.1 108.9L117.8 114.8L121.8 124.4L129.1 135.6L133.1 146.6L140.5 151.1L146.2 159.0L151.9 165.9L150.8 169.4L154.2 180.3L154.7 191.8L153.6 207.8L151.9 220.9L153.6 231.5L155.9 240.3L160.4 249.1L163.3 252.7L166.7 259.8L171.8 268.2L174.1 273.8L181.5 275.1L186.0 277.2L190.0 280.6L193.4 286.7L196.8 293.4L199.1 301.4L203.6 307.3L209.9 315.8L211.0 322.2L218.4 329.8L221.8 338.0L228.7 343.6L234.3 349.2L237.2 346.7L232.1 341.1L225.8 329.8L220.1 317.0L215.6 308.0L208.8 298.8L207.0 292.1L214.4 295.4L223.0 307.3L228.7 317.0L235.5 326.6L242.9 334.8L250.3 343.6L257.7 353.5L260.5 362.0L259.9 368.1L266.8 372.9L273.0 377.7L282.7 381.9L294.0 386.7L302.6 389.6L311.1 392.6L319.6 390.2L328.2 393.2L335.0 399.1L340.7 403.2L350.9 406.1L359.4 407.3L363.4 409.0L368.0 414.3L371.9 420.1L372.5 425.8L377.6 428.2L383.9 433.9L389.0 436.2L396.4 439.7L403.2 440.8L404.9 436.2L407.8 432.2L413.4 435.6L416.3 441.4L419.7 446.0L420.3 454.5L419.1 461.4L413.4 468.8L411.2 475.0L406.1 477.9L404.4 483.0L402.6 488.1L399.8 494.4L403.8 501.2L399.2 506.9L398.1 511.5L400.4 518.3L407.2 525.8L411.7 533.2L416.3 541.3L420.3 550.6L424.8 558.7L427.1 565.2L432.2 571.6L439.0 575.2L444.7 578.7L450.4 599.1L638.0 599.1L638.6 578.1L638.0 566.3L638.6 557.6L643.7 553.5L647.7 547.1L653.4 541.3L659.1 535.5L661.4 528.6L661.9 523.5L659.7 514.9L656.2 511.5L646.6 509.2L640.9 504.1L633.5 499.5L623.8 499.5L615.3 496.7L607.3 496.7L601.1 491.0L589.7 486.4L584.0 488.7L578.3 483.6L572.7 481.3L575.5 474.5L571.0 468.8L566.4 459.1L559.0 452.2L549.9 449.4L540.2 449.4L532.9 448.2L527.2 443.7L519.2 435.6L513.0 433.3L508.4 426.4L502.7 423.0L494.8 423.0L487.4 425.3L481.7 422.4L472.0 423.0L465.8 417.2L460.6 416.6L454.4 411.9L451.5 417.7L453.3 423.0L447.6 416.6L442.4 418.3L437.3 420.1L430.5 423.5L428.8 429.9L424.8 433.9L420.3 433.9L417.4 431.6L411.2 429.3L406.1 428.2L400.4 431.6L393.5 431.6L388.4 426.4L384.5 420.6L383.3 412.5L385.0 403.8L386.2 396.1L379.9 392.0L371.9 391.4L365.1 392.0L358.3 392.6L358.3 384.9L358.9 376.5L361.7 369.3L364.5 357.8L359.4 357.8L350.9 359.0L345.8 361.4L345.2 368.1L339.5 375.3L333.8 375.3L324.2 377.7L317.9 374.7L312.2 370.5L308.8 364.5L306.0 358.4L303.7 351.6L304.8 340.5L306.6 330.4L306.0 321.5L309.4 315.1L318.5 309.3L324.2 306.0L331.0 306.0L336.7 306.7L342.4 309.3L349.2 308.6L352.0 304.7L350.9 302.1L356.6 301.4L364.0 301.4L370.8 302.1L374.8 306.0L380.5 304.0L385.0 306.7L389.0 312.5L390.1 320.3L394.1 326.6L398.1 334.2L402.1 334.8L404.4 328.5L403.8 321.5L401.5 313.8L399.2 306.7L397.0 300.1L398.1 292.8L402.1 287.4L408.9 282.7L413.4 278.6L420.3 273.8L426.5 268.9L429.9 264.0L427.7 254.8L429.9 249.8L433.3 244.7L436.2 238.9L439.0 232.2L440.2 229.2L447.6 227.7L453.3 223.9L458.4 222.4L461.8 220.9L458.4 214.8L457.2 210.1L461.8 205.4L468.6 200.6L476.0 199.9L479.4 195.8L487.4 192.6L493.1 189.4L490.8 193.4L484.5 201.4L486.2 207.0L493.1 202.2L499.9 199.1L510.1 195.0L514.1 191.8L518.6 186.1L515.8 179.5L510.1 183.6L504.4 189.4L498.7 190.2L493.1 185.3L491.3 179.5L487.4 173.6L491.3 168.5L494.2 163.3L487.4 160.7L480.0 161.6L470.3 165.9L462.9 175.3L458.9 177.0L464.1 169.4L470.3 160.7L477.1 159.0L481.7 151.9L493.1 151.1L504.4 151.9L515.8 151.9L524.3 148.4L531.1 142.1L536.8 139.3L542.5 132.9L541.4 123.5L534.6 118.7L525.5 113.8L518.6 105.0L511.2 98.9L508.4 88.7L505.6 78.2L499.9 70.6L494.8 58.5L491.3 50.5L487.9 59.6L481.7 67.3L476.0 72.8L470.3 69.5L465.8 62.9L464.1 51.7L461.8 42.4L453.3 38.9L446.4 31.7L439.0 28.0L430.5 26.8L419.1 24.4L415.7 32.9L418.6 44.7L419.1 57.3L418.0 70.6L423.1 81.4L424.3 93.8L420.8 104.0L413.4 110.9L410.0 116.7L411.2 128.2L412.3 138.4L407.8 142.1L402.6 141.1L398.1 131.9L392.4 127.2L391.8 116.7L391.8 106.0L382.2 105.0L373.6 104.0L365.1 97.9L356.6 91.8L348.1 86.6L339.5 85.6L332.7 86.6L328.2 74.9L323.6 67.3L321.9 53.9L323.6 40.0L329.3 30.5L335.6 23.1L342.4 19.4L348.1 10.6L356.6 4.1L362.3 -2.5L368.0 -21.5L370.8 -82.4ZM507.3 -82.4L510.1 -28.6L504.4 -16.0L497.0 -7.8L493.1 1.5L491.3 13.1L487.4 20.6L481.7 25.6L471.4 23.1L464.6 18.2L456.1 14.4L447.6 9.3L440.2 0.2L430.5 0.2L422.0 -5.1L415.2 -7.8L413.4 -21.5L410.6 -82.4ZM368.0 -21.5L373.6 -9.2L382.2 2.8L393.5 6.7L402.1 8.0L396.4 -2.5L387.9 -18.7L382.2 -21.5ZM721.6 -21.5L731.9 -11.9L726.2 -6.5L733.6 1.5L734.7 8.0L746.1 11.8L755.7 13.1L766.0 8.0L775.6 1.5L782.5 -7.8L781.3 -16.0L780.2 -21.5ZM522.1 174.4L527.2 166.8L530.0 159.9L533.4 149.3L538.5 139.3L544.2 140.2L542.5 151.1L549.9 157.2L555.6 160.7L555.6 169.4L560.1 175.3L557.9 182.0L552.8 179.5L547.1 180.3L541.4 174.4L532.9 174.4L525.5 174.4ZM377.1 355.3L382.2 350.4L390.7 347.9L399.2 347.9L407.8 351.0L417.4 355.9L424.8 359.6L430.5 362.6L437.9 365.7L436.2 366.9L419.1 367.5L419.7 363.3L413.4 357.8L402.1 355.3L393.5 354.1L385.0 354.7ZM436.2 375.9L445.9 367.5L456.1 367.5L465.8 371.7L470.9 375.3L467.5 377.7L458.9 377.7L453.3 381.3L447.6 377.7L437.9 377.7ZM414.6 376.5L422.5 375.9L426.5 378.9L420.3 380.1L414.6 377.7ZM477.7 375.9L486.8 376.5L486.2 378.9L477.7 378.9ZM928.0 -82.4L936.6 -21.5L932.6 -14.6L925.2 -5.1L919.5 1.5L913.8 10.6L905.3 16.9L896.8 23.1L889.4 29.3L888.2 42.4L888.8 52.8L891.6 62.9L892.8 69.5L897.3 74.9L902.4 76.0L908.1 72.8L913.8 66.2L919.5 61.8L921.2 55.1L923.5 64.0L926.9 73.9L929.7 83.5L933.1 92.8L933.1 102.0L940.5 103.0L944.0 95.9L950.8 94.9L953.6 86.6L954.2 77.1L955.3 69.5L959.9 65.1L965.0 59.6L966.7 53.9L960.4 45.9L958.2 35.3L959.3 24.4L965.0 18.2L972.4 10.6L978.6 1.5L982.0 -6.5L984.9 -14.6L993.4 -18.7L1000.8 -16.0L1003.7 -7.8L1000.8 -2.5L993.4 6.7L986.6 14.4L981.5 23.1L981.5 35.3L982.0 44.7L986.0 50.5L990.6 55.1L999.1 52.8L1007.6 49.4L1016.2 48.2L1024.7 50.5L1031.5 55.1L1024.7 57.3L1017.9 60.7L1007.6 59.6L999.1 60.7L993.4 62.9L993.4 70.6L998.0 76.0L998.0 84.5L992.3 86.6L988.3 81.4L983.2 84.5L979.2 91.8L979.8 99.9L980.3 105.0L976.4 107.9L971.2 112.9L966.1 110.9L959.3 108.9L951.9 113.8L944.0 116.7L939.4 118.7L930.9 112.9L925.2 115.8L921.8 113.8L917.8 111.9L916.7 107.0L919.5 101.0L917.8 94.9L919.5 87.6L920.1 80.3L915.5 82.4L908.1 87.6L905.9 93.8L905.9 102.0L908.7 107.9L910.4 116.7L905.3 120.6L899.6 121.6L893.9 121.6L888.2 124.4L886.5 131.0L883.1 136.6L879.1 141.1L874.0 143.9L868.9 145.7L868.3 151.9L860.9 156.4L853.0 159.0L849.0 156.4L850.7 165.1L842.7 164.2L833.6 166.8L835.4 172.8L843.3 176.1L847.3 178.6L849.6 183.6L853.0 189.4L853.0 199.1L851.3 207.8L845.6 208.5L837.1 208.5L826.8 207.0L817.2 206.2L812.6 207.8L807.5 210.9L809.2 217.8L809.8 225.5L808.6 233.0L805.8 241.8L807.5 246.2L809.8 249.8L809.2 256.2L815.4 256.2L820.6 254.8L823.4 257.7L825.7 261.9L829.1 262.6L834.2 259.1L841.6 257.7L847.3 257.7L851.3 252.7L855.3 251.2L857.5 245.5L860.9 243.3L858.1 238.1L862.1 232.2L865.5 227.0L872.3 223.9L878.0 219.4L877.4 211.7L882.5 207.8L888.2 209.3L895.1 210.9L900.7 207.0L906.4 204.6L910.4 200.6L915.5 203.0L918.4 207.8L920.1 212.4L923.5 216.3L928.0 220.1L932.6 224.7L937.7 225.5L940.5 228.5L944.5 232.2L948.5 234.4L949.6 238.9L951.3 243.3L949.1 247.6L950.2 249.8L953.6 246.2L954.2 242.5L957.0 241.8L957.6 238.9L954.2 236.7L956.5 231.5L961.6 232.2L965.0 233.7L962.7 230.0L958.2 227.7L952.5 224.7L950.2 220.1L945.1 219.4L940.5 215.5L937.1 207.8L930.3 202.2L929.7 195.8L930.9 191.8L934.9 189.4L938.3 191.0L937.7 195.0L942.2 194.2L944.5 197.5L946.8 203.0L950.8 207.8L956.5 211.7L961.0 213.2L965.0 216.3L969.5 220.9L970.7 225.5L970.1 231.5L973.5 236.7L975.8 240.3L978.1 244.0L980.9 246.9L982.6 251.2L983.8 257.7L987.7 260.5L991.1 259.8L989.4 254.1L992.3 249.8L996.3 247.6L989.4 242.5L991.7 240.3L988.3 234.4L989.4 230.7L995.1 233.0L999.1 227.7L1005.4 227.7L1008.8 230.0L1011.6 231.5L1015.0 231.5L1020.1 227.7L1024.7 227.0L1025.8 225.5L1019.0 222.4L1019.0 214.8L1017.3 210.1L1022.4 205.4L1023.6 198.3L1028.7 194.2L1032.7 187.7L1034.9 183.6L1040.0 182.8L1044.6 186.9L1050.3 188.6L1050.8 192.6L1045.2 193.4L1050.3 199.9L1054.8 199.9L1061.1 195.8L1067.3 193.4L1061.7 191.8L1058.8 188.6L1061.7 183.6L1067.3 182.0L1075.9 178.6L1083.3 177.8L1078.1 183.6L1075.9 187.7L1073.6 192.6L1069.0 194.2L1071.9 198.3L1077.0 201.4L1081.6 204.6L1087.2 208.5L1092.4 212.4L1095.8 217.1L1096.3 222.4L1091.8 225.5L1085.0 227.0L1077.6 227.7L1071.3 226.2L1067.3 224.7L1062.2 221.7L1058.2 219.4L1052.0 219.4L1044.0 221.7L1038.3 224.7L1031.5 225.5L1026.4 226.2L1016.2 230.0L1010.5 233.7L1008.8 238.1L1012.2 241.8L1014.5 246.2L1010.5 246.9L1014.5 251.2L1016.2 256.2L1019.0 257.7L1022.4 258.4L1027.5 261.9L1033.2 259.8L1038.9 258.4L1044.6 262.6L1050.3 261.9L1056.5 257.7L1063.4 257.7L1065.1 261.9L1063.4 266.8L1063.9 271.7L1061.7 277.2L1059.4 283.3L1057.7 289.4L1055.4 294.1L1050.3 296.8L1044.6 296.1L1040.6 294.1L1035.5 293.4L1029.2 296.1L1024.7 298.1L1016.2 295.4L1004.8 293.4L996.3 290.8L990.6 286.7L984.9 284.7L979.2 285.4L974.7 288.8L973.5 297.4L969.0 302.1L965.0 300.1L959.3 297.4L950.8 295.4L946.8 289.4L940.5 286.1L933.7 284.7L926.9 283.3L922.3 279.3L918.4 274.5L921.2 270.3L922.3 265.4L919.5 259.8L922.3 256.2L917.8 254.8L911.0 254.1L905.3 257.0L896.8 256.2L888.2 258.4L879.7 257.7L871.2 259.1L862.6 263.3L854.1 266.1L847.3 269.6L839.9 268.9L831.4 266.8L826.3 264.7L824.0 270.3L821.1 277.2L816.0 279.9L810.9 282.7L806.9 287.4L804.1 294.8L804.6 300.7L803.5 306.7L797.8 311.9L791.6 315.8L784.7 319.6L780.2 326.6L776.8 331.1L773.9 338.6L768.8 343.6L766.5 351.0L763.1 359.0L766.0 365.7L767.1 371.7L768.3 378.9L766.5 387.3L764.3 393.2L760.9 397.9L763.1 401.4L764.8 406.7L764.3 411.9L767.1 414.8L772.8 418.3L775.6 421.2L779.1 425.8L784.2 429.9L786.5 435.1L790.4 440.8L795.5 444.2L801.2 448.2L805.8 452.2L814.3 456.2L817.2 458.0L822.8 456.2L830.2 454.0L837.1 452.8L843.9 454.5L849.6 455.7L857.0 451.7L865.5 448.8L872.3 447.1L879.7 446.5L885.4 447.1L891.1 451.7L893.9 458.0L899.6 458.0L908.1 457.4L911.0 460.8L915.5 465.9L915.5 471.6L913.8 476.7L912.7 481.3L911.0 487.0L913.8 493.2L918.4 498.9L923.5 504.6L927.5 510.3L929.2 516.0L930.9 520.0L933.7 525.8L935.4 531.5L934.9 537.3L937.1 543.6L938.3 548.8L936.6 554.6L931.4 560.5L929.7 566.3L928.0 572.2L926.9 579.3L925.2 599.1L1087.2 599.1L1082.7 581.1L1088.4 577.0L1090.1 572.2L1090.7 565.2L1090.1 557.6L1089.5 548.8L1086.1 541.3L1083.8 533.2L1083.3 527.5L1081.0 520.6L1081.6 514.9L1083.3 510.9L1085.5 506.3L1088.4 500.1L1092.4 495.5L1096.3 492.1L1101.5 486.4L1107.1 480.7L1114.5 473.9L1121.4 469.9L1128.2 462.5L1133.9 455.7L1138.4 447.7L1143.0 439.7L1147.5 429.9L1149.8 423.0L1151.5 415.4L1146.9 414.8L1141.3 417.7L1134.4 418.9L1124.2 421.2L1117.4 422.4L1111.1 423.0L1106.0 417.2L1103.2 411.4L1100.3 407.9L1096.3 403.8L1091.8 399.1L1086.1 393.8L1082.7 389.6L1079.3 381.9L1075.9 375.9L1071.9 369.3L1071.3 361.4L1069.6 354.7L1062.2 347.3L1061.7 342.4L1057.7 334.2L1053.1 325.4L1050.3 320.3L1045.7 313.8L1045.2 304.7L1048.6 313.8L1053.1 319.0L1055.4 315.1L1058.2 307.3L1058.2 315.8L1061.7 322.2L1066.2 328.5L1070.2 336.1L1074.7 340.5L1078.7 344.8L1082.1 352.9L1083.3 359.0L1087.2 365.1L1091.2 371.7L1094.6 378.9L1099.2 386.1L1102.6 392.0L1103.2 397.9L1105.4 403.2L1106.0 409.6L1110.0 410.8L1116.2 409.0L1124.2 406.1L1132.7 402.6L1140.1 399.1L1146.9 395.5L1154.3 392.0L1157.2 387.9L1164.0 386.1L1172.5 381.9L1178.2 379.5L1182.8 374.7L1188.5 370.5L1188.5 363.9L1193.0 359.6L1198.1 354.7L1199.8 351.6L1195.3 347.3L1191.9 344.2L1186.7 343.0L1181.6 339.2L1179.9 334.2L1179.9 328.5L1175.9 332.3L1172.5 336.1L1168.5 340.5L1161.2 341.7L1155.5 342.4L1152.6 340.5L1153.2 334.2L1150.9 329.2L1148.6 333.0L1147.5 337.4L1144.1 329.8L1141.8 324.7L1138.4 320.3L1135.6 315.1L1132.7 309.3L1132.7 304.0L1136.7 304.0L1141.8 304.0L1145.8 308.6L1148.6 313.8L1152.6 318.3L1158.9 320.9L1165.1 325.4L1170.8 326.6L1176.5 324.1L1181.1 322.8L1185.6 331.1L1195.3 333.6L1203.8 334.2L1210.1 334.8L1216.9 334.8L1225.4 334.2L1232.8 333.6L1239.1 333.6L1242.5 337.4L1243.6 343.0L1247.6 344.8L1251.0 349.8L1255.5 352.3L1257.8 357.8L1262.4 362.0L1269.2 360.2L1272.6 357.8L1273.7 364.5L1274.3 372.9L1275.4 380.1L1277.2 388.4L1279.4 394.9L1282.3 400.8L1284.0 407.3L1285.7 411.9L1288.5 416.6L1291.4 420.6L1293.6 427.0L1295.3 432.2L1300.5 436.8L1304.4 432.2L1308.4 429.9L1310.7 424.1L1313.5 421.2L1314.1 414.3L1316.4 408.4L1315.8 400.8L1315.2 394.9L1319.2 391.4L1323.8 389.0L1327.8 386.7L1333.4 381.3L1338.0 377.1L1343.7 371.1L1350.5 367.5L1353.9 362.0L1354.5 357.2L1361.3 354.7L1365.9 355.9L1371.5 355.3L1377.2 351.6L1381.8 352.9L1382.9 359.0L1384.6 363.3L1388.6 368.1L1392.0 372.9L1395.4 378.9L1396.6 387.9L1397.1 391.4L1401.7 392.0L1407.4 387.3L1413.0 386.1L1415.3 391.4L1416.5 397.9L1418.2 406.1L1420.4 413.1L1420.4 423.0L1419.3 430.5L1418.7 436.2L1421.0 438.5L1425.6 444.2L1430.1 448.8L1430.7 454.5L1432.9 461.4L1435.8 467.1L1439.8 470.5L1445.5 474.5L1448.3 475.6L1452.3 475.0L1450.6 468.8L1447.7 462.5L1447.2 455.7L1443.2 450.0L1439.8 447.7L1435.8 443.7L1431.8 442.5L1429.5 436.2L1427.8 430.5L1423.9 427.0L1423.9 420.6L1425.6 415.4L1428.4 410.2L1429.0 405.5L1433.5 406.1L1433.5 410.8L1438.1 410.8L1442.6 413.7L1445.5 418.9L1448.9 423.0L1453.4 423.5L1456.3 428.2L1455.7 433.9L1458.0 433.3L1463.7 429.3L1466.5 424.1L1472.8 421.8L1478.4 418.3L1480.7 415.4L1481.3 408.4L1480.7 401.4L1478.4 394.9L1475.6 390.2L1471.0 386.7L1467.1 382.5L1464.2 378.3L1461.4 374.1L1461.4 369.3L1463.7 365.7L1466.5 362.6L1471.0 358.4L1475.6 357.2L1480.1 357.8L1483.6 358.4L1485.8 365.1L1488.1 361.4L1492.1 358.4L1496.1 357.2L1501.2 355.3L1505.7 352.9L1509.7 352.9L1513.7 350.4L1518.8 349.8L1523.9 347.3L1527.9 343.6L1531.9 339.2L1535.3 336.1L1539.3 332.3L1540.4 327.3L1543.3 322.2L1547.2 317.0L1550.6 311.9L1552.9 306.7L1550.6 301.4L1552.9 298.1L1550.6 292.8L1547.2 286.7L1544.4 280.6L1540.4 274.5L1538.1 270.3L1541.0 266.1L1546.1 262.6L1550.6 257.7L1556.3 254.1L1551.8 252.0L1546.1 250.5L1541.6 254.1L1536.4 254.8L1533.6 247.6L1529.0 242.5L1532.5 240.3L1537.6 238.9L1542.1 234.4L1547.2 230.0L1551.2 227.7L1555.2 230.7L1551.8 236.7L1549.5 241.8L1552.4 242.5L1556.3 238.1L1560.9 235.9L1566.6 235.2L1570.0 237.4L1572.3 239.6L1571.1 244.0L1570.5 249.8L1575.1 251.2L1579.1 252.0L1579.6 256.2L1578.5 261.2L1580.2 266.1L1578.5 272.4L1580.8 274.5L1584.8 272.4L1589.9 271.0L1594.4 268.9L1596.1 264.7L1596.1 258.4L1595.0 252.7L1591.0 246.9L1588.2 242.5L1584.8 238.1L1585.3 235.2L1590.5 232.2L1596.1 228.5L1597.8 224.7L1599.5 219.4L1603.0 216.3L1606.9 214.0L1610.4 210.1L1614.9 213.2L1619.4 212.4L1626.3 208.5L1631.4 203.8L1636.5 196.7L1641.1 191.0L1645.6 183.6L1648.4 177.0L1651.9 171.1L1657.0 166.8L1658.7 158.1L1659.3 149.3L1662.1 142.1L1663.2 133.8L1662.7 127.2L1659.3 123.5L1653.0 117.7L1645.6 118.7L1640.5 114.8L1637.6 110.9L1639.4 104.0L1644.5 96.9L1650.2 90.8L1655.8 81.4L1661.5 70.6L1668.3 65.1L1675.7 60.7L1684.3 60.7L1694.5 61.8L1701.3 59.6L1709.9 57.3L1718.4 60.7L1726.9 65.1L1735.4 62.9L1741.1 59.6L1738.3 51.7L1744.0 44.7L1751.4 36.5L1755.3 32.9L1763.9 32.9L1771.3 40.0L1768.4 47.0L1762.7 56.2L1755.3 70.6L1750.2 78.2L1746.8 86.6L1745.1 98.9L1744.5 111.9L1746.2 126.3L1749.7 137.5L1750.8 144.8L1755.3 140.2L1761.0 131.0L1766.7 124.4L1769.6 116.7L1778.1 108.9L1780.9 102.0L1779.8 94.9L1785.5 89.7L1787.8 81.4L1782.1 76.0L1783.8 70.6L1789.5 61.8L1792.3 55.1L1798.0 51.7L1806.5 49.4L1815.0 48.2L1826.4 53.9L1854.8 53.9L1854.8 -82.4ZM831.4 69.5L841.6 69.5L837.1 79.2L842.7 79.2L849.6 81.4L847.9 88.7L844.4 95.9L848.4 98.9L850.7 105.0L853.0 110.9L858.1 114.8L860.4 120.6L861.5 125.4L866.6 127.2L869.5 130.1L868.9 134.7L866.1 137.5L867.8 142.1L864.9 145.7L859.8 146.6L854.1 147.5L848.4 148.4L839.9 150.2L834.2 151.1L827.4 152.8L831.4 146.6L835.9 143.0L841.6 141.1L836.5 139.3L830.2 138.4L835.4 133.8L836.5 128.2L833.6 125.4L842.2 123.5L842.7 117.7L840.5 111.9L837.1 108.9L831.9 109.9L832.5 103.0L828.0 104.0L828.5 96.9L826.8 90.8L825.1 84.5L828.0 78.2L830.2 72.8ZM825.1 105.0L818.9 104.0L813.2 106.0L810.9 112.9L802.9 114.8L804.1 121.6L807.5 124.4L803.5 131.0L801.2 136.6L805.2 140.2L811.5 139.3L817.2 135.6L823.4 133.8L825.7 126.3L824.5 120.6L828.0 111.9ZM907.6 226.2L912.1 225.5L915.5 230.7L914.4 240.3L911.0 241.8L907.6 241.8L908.1 234.4ZM909.3 212.4L913.2 211.7L913.8 219.4L912.1 223.9L908.7 220.9ZM930.3 248.4L936.6 247.6L948.5 246.9L945.7 253.4L946.2 258.4L941.1 256.2L930.9 252.0ZM993.4 266.1L999.1 267.5L1009.3 268.2L1006.5 270.3L996.3 270.3L993.4 268.2ZM1043.5 269.6L1047.4 267.5L1056.5 265.4L1053.1 270.3L1047.4 273.1L1044.0 271.7ZM1314.1 427.0L1319.2 430.5L1322.6 436.2L1325.5 441.4L1323.8 446.5L1318.1 449.4L1314.7 447.1L1313.5 440.2L1313.5 433.3ZM1655.8 223.2L1662.7 220.9L1665.5 214.8L1674.0 219.4L1681.4 212.4L1687.1 209.3L1684.8 202.2L1679.7 203.0L1672.9 199.1L1667.2 191.8L1664.9 194.2L1664.9 203.8L1663.2 210.1L1658.1 209.3L1655.3 214.8L1657.0 218.6ZM1655.8 225.5L1661.0 223.2L1664.4 225.5L1666.6 235.9L1666.1 243.3L1661.5 246.9L1661.0 254.8L1660.4 261.9L1661.0 266.1L1657.0 269.6L1654.7 268.2L1650.2 270.3L1649.0 273.1L1644.5 273.1L1638.8 273.1L1638.2 275.1L1633.1 280.6L1628.0 278.6L1629.7 273.1L1625.1 272.4L1618.9 274.5L1613.2 275.1L1608.1 277.9L1604.7 277.9L1609.8 284.0L1607.5 294.1L1604.7 297.4L1600.7 296.1L1600.1 290.8L1597.8 286.1L1597.3 282.7L1600.7 279.9L1604.1 277.2L1606.9 274.5L1612.1 268.9L1618.9 266.8L1626.3 266.1L1632.0 266.1L1633.7 261.2L1637.6 255.5L1640.5 257.7L1646.2 254.1L1649.0 250.5L1653.0 246.9L1654.7 240.3L1655.8 234.4L1655.3 230.0ZM1613.2 282.7L1616.0 277.2L1623.4 275.1L1625.7 278.6L1622.9 282.0L1617.7 281.3L1614.9 285.4ZM1667.2 187.7L1670.6 182.8L1675.2 181.1L1674.0 172.8L1670.6 165.1L1678.0 158.1L1678.6 149.3L1674.6 140.2L1674.0 129.1L1671.8 113.8L1668.9 114.8L1670.1 124.4L1666.1 132.9L1667.2 144.8L1668.3 158.1L1666.6 165.1L1667.2 175.3ZM1690.0 203.8L1695.6 199.1L1701.3 193.4L1695.6 195.8ZM1542.7 348.6L1545.0 341.1L1547.8 335.5L1552.9 336.1L1551.2 342.4L1547.8 351.6L1546.7 355.3L1543.8 351.6ZM1477.3 371.7L1482.4 366.9L1488.7 366.3L1490.9 369.3L1487.5 375.9L1482.4 377.7L1477.9 375.9ZM1545.5 375.9L1550.6 375.3L1554.6 375.9L1555.2 384.3L1552.9 389.6L1551.2 394.9L1551.8 400.8L1556.3 401.4L1560.3 403.8L1565.4 408.4L1562.6 410.2L1558.0 407.9L1553.5 404.9L1549.5 404.9L1546.1 400.8L1545.5 397.9L1542.1 394.9L1541.0 389.6L1544.4 387.3L1545.0 381.3ZM1544.4 405.5L1548.9 406.1L1550.6 411.4L1547.8 413.1L1546.1 409.6ZM1566.6 411.4L1573.4 413.1L1574.0 420.1L1570.5 424.7L1567.7 425.8L1566.6 418.9ZM1552.9 415.4L1559.7 417.2L1556.9 423.0L1552.9 422.4ZM1556.3 421.2L1562.0 423.0L1560.9 430.5L1556.3 428.7ZM1563.7 418.9L1565.4 421.2L1562.0 428.7L1561.5 424.7ZM1553.5 443.1L1558.6 439.7L1563.2 437.4L1566.6 433.9L1570.5 431.6L1573.4 427.0L1576.8 430.5L1579.1 437.4L1577.9 444.2L1574.0 447.1L1572.3 451.1L1566.0 447.7L1564.3 443.7L1559.2 440.2L1554.6 443.7ZM1526.2 435.1L1530.7 430.5L1535.3 425.8L1539.3 418.3L1537.6 423.0L1533.0 429.9L1527.9 435.6ZM1479.6 472.8L1483.0 480.2L1481.3 485.8L1485.3 491.0L1486.4 498.9L1490.9 500.6L1495.5 502.9L1502.3 501.2L1510.8 504.6L1518.2 504.6L1520.5 500.1L1522.2 493.2L1523.9 488.7L1527.9 481.9L1530.2 477.9L1536.4 477.3L1530.7 469.9L1531.9 465.9L1528.5 462.5L1533.0 457.4L1537.6 453.4L1532.5 450.0L1529.0 446.0L1525.1 443.1L1522.2 446.0L1519.4 449.4L1516.0 453.4L1512.6 456.8L1508.0 458.0L1504.0 463.1L1499.5 465.9L1493.8 468.2L1490.9 472.8L1486.4 473.3ZM1401.7 451.1L1408.5 453.4L1414.2 454.0L1418.7 459.1L1423.9 464.2L1430.1 469.9L1434.1 472.8L1439.2 476.2L1444.3 478.5L1448.9 483.6L1454.0 488.7L1456.3 494.9L1461.9 500.1L1462.5 505.8L1461.9 516.0L1458.0 516.0L1454.0 516.6L1450.0 511.5L1443.2 506.3L1436.9 500.6L1433.5 496.1L1430.1 488.7L1426.7 482.4L1423.9 478.5L1421.0 473.3L1415.9 468.2L1411.3 463.1L1406.8 457.4ZM1458.0 521.8L1462.5 517.2L1467.6 517.2L1475.6 518.9L1479.6 521.8L1487.5 522.3L1492.1 520.6L1500.0 522.3L1504.0 525.8L1510.8 527.5L1510.3 532.7L1503.5 530.4L1493.8 530.4L1485.3 529.2L1476.7 527.5L1469.9 525.8L1464.8 524.6L1459.7 522.3ZM1510.8 529.2L1517.1 530.9L1514.8 533.2L1511.4 532.1ZM1519.4 529.8L1522.8 530.4L1522.2 533.8L1519.4 533.2ZM1524.5 531.5L1533.6 529.8L1537.0 531.5L1533.6 533.8L1525.1 534.4ZM1541.0 530.9L1550.6 531.5L1559.2 530.4L1558.0 532.7L1545.0 533.2ZM1536.4 536.1L1543.8 537.3L1546.7 541.3L1539.8 539.6ZM1562.0 541.9L1567.7 537.3L1575.1 531.5L1581.9 530.9L1579.1 533.8L1570.5 537.8L1564.9 541.9ZM1538.7 514.3L1539.8 507.5L1538.7 502.3L1535.3 498.9L1537.6 494.4L1539.3 487.5L1541.0 481.3L1543.3 477.9L1547.8 477.3L1556.3 477.3L1562.0 477.9L1567.7 475.6L1571.7 473.9L1569.4 478.5L1566.0 480.7L1560.3 481.3L1553.5 480.2L1547.2 480.7L1544.4 484.7L1546.7 489.8L1550.6 488.1L1555.8 487.5L1560.9 488.1L1558.6 491.5L1553.5 492.7L1550.1 495.5L1553.5 500.1L1556.3 504.6L1559.7 507.5L1556.9 510.9L1552.4 510.3L1550.6 506.9L1547.8 501.2L1544.4 499.5L1544.4 505.8L1545.0 514.3ZM1584.8 472.2L1588.2 474.5L1587.0 479.6L1591.6 481.3L1587.6 484.1L1587.6 488.1L1584.8 485.3L1584.2 477.9ZM1587.6 500.1L1596.1 498.9L1603.5 501.8L1601.8 504.1L1593.3 502.9ZM1575.7 501.2L1583.1 500.6L1581.9 504.6L1576.2 503.5ZM1604.7 491.0L1610.4 486.4L1618.9 487.0L1622.9 488.7L1622.9 497.2L1627.4 501.8L1633.1 496.1L1639.9 492.1L1647.3 493.2L1654.7 496.1L1661.5 497.8L1670.1 501.2L1678.6 504.6L1684.3 507.5L1688.8 512.6L1692.8 517.2L1699.1 518.3L1700.8 521.8L1696.8 525.8L1701.3 529.8L1707.0 534.4L1708.7 537.8L1713.8 541.9L1707.0 541.9L1698.5 540.2L1692.8 534.4L1687.1 528.1L1681.4 525.8L1675.7 529.8L1674.6 534.4L1670.1 536.1L1661.5 535.0L1655.3 529.2L1649.0 530.4L1644.5 525.8L1647.3 522.3L1643.3 512.6L1635.9 509.8L1628.5 508.0L1620.6 505.2L1616.0 505.8L1610.4 499.5L1614.3 497.2L1618.9 496.1L1611.5 495.5L1606.4 492.7ZM1703.0 514.9L1709.9 514.9L1717.2 514.3L1722.4 510.9L1725.8 512.6L1721.2 517.2L1712.7 518.9L1704.2 517.8ZM1717.2 498.9L1724.1 501.8L1730.9 508.6L1728.1 509.2L1721.2 502.9ZM1741.1 514.3L1746.2 520.0L1744.0 522.3L1740.0 516.6ZM1749.7 522.9L1761.0 527.5L1759.3 529.2L1750.2 525.8ZM1766.7 535.5L1774.1 537.3L1773.0 539.6L1767.3 538.4ZM1772.4 530.4L1778.1 537.3L1776.4 539.0L1771.3 532.7ZM1778.1 541.3L1782.1 543.0L1779.8 544.8ZM1806.5 568.1L1810.5 571.1L1809.4 574.0L1807.1 572.2ZM1542.1 599.1L1554.6 587.1L1559.2 578.1L1562.6 576.4L1566.6 572.2L1570.5 566.9L1575.7 564.6L1580.8 562.2L1584.8 564.6L1588.7 568.7L1593.3 568.7L1596.7 566.3L1598.4 560.5L1601.3 555.8L1604.7 552.9L1609.2 552.9L1613.2 551.7L1613.8 548.8L1618.9 550.6L1624.6 552.3L1630.3 551.7L1634.2 551.2L1637.6 553.5L1635.9 557.6L1632.5 561.1L1630.3 568.1L1634.2 572.2L1639.9 574.6L1645.6 578.1L1651.3 582.9L1658.1 584.7L1661.0 581.1L1663.8 574.0L1664.9 564.6L1664.4 556.4L1666.6 550.6L1669.5 544.8L1671.8 547.1L1674.0 553.5L1675.7 558.7L1676.9 565.2L1681.4 565.2L1686.0 569.3L1686.5 575.2L1689.4 581.1L1690.0 599.1ZM1140.1 551.7L1143.5 558.7L1145.8 566.3L1146.9 572.2L1144.1 581.1L1141.3 593.1L1110.0 593.1L1110.0 581.1L1112.3 576.4L1118.5 574.0L1124.2 572.8L1128.7 567.5L1132.2 561.1L1136.7 556.4Z" fill="#b9e6d4"/>
<g clip-path="url(#lc)"><path d="M402.0 458.0L462.0 450.0L532.0 458.0L582.0 476.0L622.0 508.0L622.0 530.0L572.0 530.0L532.0 553.0L492.0 576.0L412.0 576.0L400.0 528.0ZM942.0 453.0L992.0 443.0L1042.0 458.0L1052.0 498.0L1042.0 538.0L992.0 548.0L952.0 528.0L937.0 488.0ZM792.0 428.0L852.0 433.0L892.0 428.0L922.0 420.0L932.0 438.0L892.0 448.0L832.0 448.0L792.0 443.0ZM1072.0 0.0L1202.0 0.0L1212.0 38.0L1192.0 93.0L1132.0 88.0L1082.0 93.0L1042.0 58.0L1022.0 28.0ZM1352.0 33.0L1432.0 28.0L1512.0 58.0L1507.0 118.0L1452.0 133.0L1372.0 108.0L1347.0 63.0ZM1492.0 38.0L1582.0 28.0L1632.0 58.0L1612.0 108.0L1532.0 118.0L1492.0 88.0ZM922.0 28.0L952.0 18.0L992.0 38.0L982.0 78.0L942.0 88.0L917.0 63.0ZM312.0 123.0L352.0 116.0L377.0 133.0L362.0 158.0L327.0 158.0ZM107.0 103.0L162.0 98.0L192.0 148.0L182.0 163.0L147.0 158.0L122.0 133.0ZM1372.0 328.0L1412.0 308.0L1432.0 338.0L1427.0 388.0L1402.0 398.0L1382.0 368.0ZM1542.0 448.0L1592.0 438.0L1622.0 478.0L1582.0 508.0L1547.0 498.0ZM1412.0 448.0L1452.0 458.0L1482.0 498.0L1462.0 508.0L1422.0 478.0ZM1632.0 488.0L1702.0 498.0L1732.0 528.0L1682.0 538.0L1632.0 518.0Z" fill="#9fdabf"/><path d="M175.0 246.0L169.0 193.0L182.0 168.0L214.0 161.0L222.0 140.0L239.0 130.0L252.0 147.0L271.0 161.0L292.0 178.0L302.0 204.0L298.0 225.0L309.0 246.0L302.0 267.0L296.0 288.0L292.0 320.0L290.0 352.0L281.0 362.0L260.0 352.0L243.0 310.0L222.0 293.0L235.0 346.0L202.0 299.0L197.0 284.0L182.0 257.0ZM215.0 133.0L232.0 123.0L250.0 128.0L262.0 148.0L247.0 158.0L222.0 158.0ZM1128.0 157.0L1212.0 124.0L1272.0 124.0L1317.0 145.0L1332.0 193.0L1362.0 154.0L1422.0 136.0L1527.0 154.0L1544.0 178.0L1502.0 198.0L1532.0 218.0L1517.0 240.0L1467.0 268.0L1422.0 283.0L1416.0 313.0L1362.0 316.0L1317.0 298.0L1287.0 286.0L1266.0 292.0L1260.0 334.0L1272.0 358.0L1242.0 363.0L1222.0 328.0L1182.0 308.0L1132.0 283.0L1112.0 258.0L1092.0 238.0L1112.0 218.0L1132.0 208.0L1122.0 178.0ZM1262.0 308.0L1284.0 306.0L1304.0 323.0L1308.0 348.0L1294.0 362.0L1267.0 363.0L1254.0 343.0ZM1032.0 228.0L1062.0 226.0L1092.0 230.0L1097.0 248.0L1052.0 250.0L1032.0 246.0ZM397.0 503.0L407.0 508.0L422.0 543.0L442.0 568.0L452.0 576.0L427.0 576.0L402.0 543.0L394.0 518.0ZM600.0 530.0L612.0 526.0L616.0 540.0L604.0 544.0ZM1542.0 558.0L1592.0 548.0L1632.0 563.0L1672.0 576.0L1542.0 576.0Z" fill="#f2ece2"/><path d="M732.0 400.0L797.0 400.0L842.0 415.0L887.0 406.0L938.0 415.0L992.0 421.0L1052.0 420.0L1060.0 458.0L1074.0 503.0L1137.0 503.0L1232.0 408.0L1242.0 363.0L1222.0 328.0L1182.0 308.0L1132.0 283.0L1110.0 260.0L1092.0 256.0L1052.0 256.0L1032.0 258.0L1020.0 268.0L972.0 295.0L920.0 283.0L908.0 262.0L842.0 277.0L806.0 298.0L764.0 358.0ZM1272.0 218.0L1332.0 208.0L1382.0 218.0L1432.0 233.0L1422.0 283.0L1416.0 313.0L1362.0 316.0L1317.0 298.0L1287.0 286.0L1277.0 253.0Z" fill="#f6f2ec"/><path d="M1061.0 400.0L1082.0 394.0L1100.0 408.0L1107.0 426.0L1097.0 450.0L1072.0 458.0L1057.0 443.0ZM1242.0 208.0L1282.0 204.0L1317.0 213.0L1312.0 238.0L1277.0 244.0L1247.0 233.0ZM1092.0 198.0L1127.0 206.0L1132.0 223.0L1107.0 228.0L1092.0 216.0ZM1327.0 158.0L1352.0 158.0L1357.0 188.0L1332.0 198.0ZM1522.0 158.0L1572.0 148.0L1592.0 198.0L1572.0 243.0L1542.0 243.0L1522.0 218.0Z" fill="#b9e6d4"/><path d="M248.0 0.0L352.0 0.0L346.0 20.0L272.0 23.0L248.0 18.0ZM60.0 0.0L117.0 0.0L120.0 14.0L82.0 18.0L62.0 16.0ZM532.0 0.0L572.0 0.0L562.0 8.0ZM416.0 24.0L444.0 24.0L462.0 38.0L472.0 63.0L452.0 60.0L428.0 68.0L418.0 58.0ZM452.0 0.0L492.0 0.0L497.0 18.0L482.0 28.0L462.0 18.0ZM0.0 0.0L32.0 0.0L42.0 18.0L22.0 33.0L0.0 38.0Z" fill="#cbcbcb"/><path d="M2.0 16.0L14.0 10.0L27.0 20.0L16.0 26.0ZM32.0 6.0L47.0 4.0L52.0 13.0L40.0 16.0ZM140.0 136.0L154.0 140.0L158.0 150.0L146.0 148.0ZM177.0 120.0L190.0 124.0L188.0 132.0ZM1368.0 220.0L1384.0 218.0L1380.0 228.0ZM1272.0 238.0L1284.0 243.0L1277.0 248.0ZM1092.0 30.0L1104.0 34.0L1098.0 42.0ZM1332.0 36.0L1352.0 32.0L1350.0 46.0L1336.0 48.0Z" fill="#eef0ef"/></g>
<path d="M552.8 -82.4L555.6 -28.6L561.3 -7.8L567.0 5.4L572.7 20.6L580.0 36.5L586.9 43.6L595.4 47.0L602.8 52.8L609.6 55.1L615.3 51.7L618.1 42.4L619.9 28.0L625.5 14.4L629.5 1.5L634.6 -7.8L640.9 -16.0L649.4 -21.5L689.2 -82.4Z" fill="#f3f3f3" stroke="#d0d0d0" stroke-width="2"/>
<path d="M1127.0 199.9L1132.7 194.2L1139.6 184.4L1146.9 182.0L1155.5 181.1L1162.3 182.0L1161.2 193.4L1152.6 195.8L1150.9 201.4L1146.4 201.4L1148.6 207.8L1153.2 214.8L1158.9 221.7L1160.0 228.5L1161.2 237.4L1164.6 241.8L1166.3 252.7L1158.3 257.7L1149.8 258.4L1141.3 252.7L1138.4 247.6L1140.1 239.6L1141.3 233.0L1145.2 231.5L1141.3 227.0L1135.6 220.9L1130.5 213.2L1129.3 205.4ZM1190.7 183.6L1199.3 185.3L1202.1 193.4L1197.0 201.4L1192.4 199.1L1191.3 191.0ZM1277.7 183.6L1286.2 182.8L1297.6 184.4L1309.0 182.8L1310.1 188.6L1300.5 188.6L1289.1 189.4L1280.6 193.4L1278.9 189.4ZM1449.4 139.3L1456.8 137.5L1465.4 130.1L1473.9 120.6L1482.4 106.0L1484.1 98.9L1481.3 99.9L1476.2 112.9L1468.2 124.4L1461.4 130.1L1452.8 136.6ZM336.1 181.1L345.2 182.8L356.6 177.0L361.1 179.5L368.0 183.6L377.6 183.6L378.8 177.0L373.6 171.9L367.4 165.1L357.7 164.2L350.9 171.1L339.5 177.8ZM360.0 199.9L362.3 211.7L360.6 219.4L363.4 222.4L368.0 217.8L369.7 208.5L368.0 201.4L373.6 194.2L377.6 189.4L370.8 188.6L362.3 193.4ZM379.3 188.6L385.0 193.4L386.2 201.4L387.9 207.0L391.3 211.7L395.3 207.0L395.8 199.1L403.2 199.1L402.1 191.8L396.4 186.9L385.0 186.1ZM385.6 221.7L396.4 223.2L406.1 217.8L411.2 212.4L402.1 214.8L390.7 219.4ZM406.1 209.3L413.4 208.5L423.1 209.3L426.0 204.6L419.1 203.8L408.9 206.2ZM308.3 150.2L312.2 140.2L308.3 128.2L299.7 118.7L296.9 121.6L302.6 132.9L305.4 144.8ZM291.2 140.2L294.0 131.0L288.4 126.3L290.1 135.6ZM194.5 42.4L211.6 40.0L223.0 36.5L237.2 24.4L225.8 20.6L211.6 25.6L200.2 32.9ZM228.7 69.5L240.0 66.2L254.2 61.8L245.7 59.6L231.5 65.1ZM1040.6 484.7L1047.4 481.3L1053.1 483.6L1056.0 488.7L1052.0 495.5L1045.2 498.4L1040.0 493.2L1040.0 488.1ZM1025.3 501.8L1027.5 502.9L1034.9 520.0L1037.2 531.5L1033.8 532.7L1029.2 522.9L1026.4 514.3ZM1053.1 537.3L1056.5 545.9L1057.7 554.6L1060.5 565.2L1056.0 560.5L1053.1 548.8ZM1064.5 468.8L1066.8 457.4L1065.1 458.5L1063.9 465.9ZM1030.4 53.9L1038.9 51.7L1046.3 40.0L1038.9 34.1L1031.5 40.0L1029.2 48.2ZM1054.3 42.4L1061.7 40.0L1067.3 28.0L1061.7 20.6L1054.8 25.6L1058.8 32.9Z" fill="#68c5df"/>
<path d="M177.5 162.5L177.5 53.9M234.3 162.5L234.3 53.9M279.8 162.5L279.8 53.9M319.6 162.5L319.6 126.3L353.7 86.6M407.8 141.1L407.8 179.5L419.1 189.4L436.2 193.4M153.6 219.4L228.7 219.4L228.7 227.0L268.5 227.0L279.8 227.0L279.8 234.4L317.9 234.4M194.5 162.5L194.5 187.7L197.4 191.8L194.5 203.8L194.5 219.4M177.5 219.4L177.5 241.8L208.2 270.3L207.6 286.1M228.7 162.5L228.7 195.8L268.5 195.8L268.5 162.5M211.6 219.4L211.6 256.2L240.0 256.2L274.1 256.2L321.9 256.2M240.0 227.0L240.0 295.4M268.5 195.8L268.5 227.0M307.1 162.5L311.1 191.8L311.1 207.8L299.7 211.7L268.5 211.7M274.1 256.2L274.1 290.8L254.2 290.8M291.2 259.8L274.1 259.8M291.2 259.8L291.2 273.8L322.5 279.9M321.9 256.2L321.9 279.9L325.3 284.0L325.3 306.0M317.9 234.4L315.1 230.0L311.1 215.5M339.5 207.8L311.1 207.8M341.2 207.8L344.6 183.6M339.5 230.0L315.1 230.0M339.5 230.0L350.3 256.2L349.8 263.3L346.4 270.3L341.2 284.0L339.0 297.4L349.2 297.4M321.9 259.8L349.8 259.8M358.3 222.4L362.3 249.1L359.4 252.7M377.6 221.7L377.6 241.1M402.1 219.4L402.1 236.7L429.9 236.7M356.6 270.3L356.6 297.4M373.1 270.3L376.5 290.8L376.5 297.4M346.4 270.3L380.5 270.3L396.4 259.1L428.2 259.1M350.9 259.8L395.3 259.1M387.3 270.3L400.4 269.6L410.6 277.2M377.6 241.1L390.1 247.6L394.1 252.7M402.1 219.4L406.1 217.1L431.6 219.4L432.8 227.0M441.9 195.8L443.0 214.0L441.3 227.0M443.0 214.0L457.2 213.2M455.5 193.4L451.5 219.4M447.6 195.8L447.6 214.0M535.7 140.2L495.9 131.0L478.8 107.0L493.1 50.5M242.9 300.7L257.1 317.0L271.3 329.8L285.5 342.4M265.6 306.7L268.5 336.1L279.8 348.6M291.2 323.5L296.9 348.6L303.7 354.7M495.9 471.6L518.6 488.7L530.0 497.2L538.5 497.2L549.9 488.7M538.5 497.2L530.0 525.8L510.1 531.5L481.7 539.0M530.0 525.8L532.9 534.4L572.7 537.3L575.5 556.4L598.2 557.6M549.9 488.7L564.1 474.5M584.0 488.7L585.2 514.3L572.7 537.3M598.2 489.8L585.2 514.3M609.6 497.2L595.4 534.4L598.2 557.6M623.8 499.5L626.7 531.5L609.6 543.0L595.4 534.4M646.6 509.2L640.9 525.8L626.7 531.5M660.8 520.0L649.4 521.8L640.9 525.8M659.1 535.5L643.7 534.4L626.7 531.5M647.7 547.1L643.7 534.4M598.2 557.6L606.8 566.3L632.4 578.1M518.6 562.2L532.9 534.4M1040.6 134.7L1053.1 111.9L1064.5 91.8L1075.9 70.6L1087.2 48.2M1061.7 150.2L1075.9 131.0L1092.9 116.7L1110.0 121.6L1124.2 144.8M1077.6 177.8L1092.9 166.8L1110.0 158.1L1124.2 166.8M1047.4 81.4L1067.3 86.6L1087.2 81.4L1110.0 70.6M1064.5 53.9L1064.5 0.2M1110.0 70.6L1110.0 0.2M1144.1 91.8L1149.8 53.9L1155.5 0.2M1110.0 121.6L1127.0 102.0L1144.1 91.8M1132.7 135.6L1155.5 116.7L1172.5 107.0L1178.2 126.3M1047.4 132.9L1061.7 121.6L1075.9 96.9L1092.9 96.9L1115.7 107.0L1132.7 135.6L1146.9 139.3M1033.2 101.0L1047.4 81.4L1070.2 53.9L1087.2 30.5L1110.0 5.4M1092.9 96.9L1110.0 70.6L1132.7 53.9L1155.5 30.5L1178.2 0.2M1115.7 107.0L1144.1 91.8L1172.5 76.0L1195.3 70.6L1218.0 53.9L1235.1 30.5M1176.5 149.3L1178.2 126.3L1189.6 96.9L1195.3 70.6M1209.5 124.4L1229.4 86.6L1235.1 30.5M1246.4 107.0L1269.2 76.0L1291.9 42.4L1314.7 11.8M1293.1 116.7L1303.3 86.6L1326.1 76.0L1348.8 59.6M1328.9 145.7L1337.4 116.7L1360.2 96.9L1382.9 76.0M1356.8 161.6L1360.2 135.6L1382.9 116.7L1405.7 96.9L1428.4 76.0M1418.2 140.2L1428.4 107.0L1451.1 86.6L1473.9 65.1M1485.3 160.7L1496.6 135.6L1508.0 107.0L1530.7 86.6L1542.1 53.9M1546.7 131.0L1564.9 102.0L1587.6 81.4L1621.7 76.0L1655.8 70.6M1584.8 153.7L1599.0 135.6L1621.7 116.7L1647.3 116.7M1625.7 168.5L1633.1 153.7L1650.2 135.6M1201.0 0.2L1223.7 53.9L1212.3 96.9M1371.5 0.2L1400.0 53.9L1428.4 76.0M1712.7 0.2L1701.3 30.5L1694.5 61.8M1771.3 40.0L1786.6 24.4L1815.0 0.2M1408.5 214.0L1411.3 245.5L1388.6 263.3L1371.5 264.7L1348.8 264.0L1314.7 266.8M1411.3 245.5L1434.1 249.1L1451.1 252.7L1462.5 238.1L1468.2 223.2M1388.6 263.3L1411.3 284.0L1419.9 300.7L1419.9 320.3M1434.1 249.1L1445.5 277.2L1462.5 284.0L1476.7 287.4L1493.8 284.0M1451.1 252.7L1473.9 270.3L1490.9 263.3L1505.2 252.7L1508.0 230.7L1516.5 223.2M1490.9 263.3L1488.1 273.8L1493.8 284.0L1510.8 290.8L1519.4 277.2L1536.4 270.3M1445.5 277.2L1448.3 310.6L1451.1 326.6L1448.3 350.4M1462.5 284.0L1465.4 313.8L1482.4 326.6L1488.1 339.2L1496.6 337.4L1510.8 339.2L1525.1 342.4M1476.7 287.4L1485.3 310.6L1482.4 326.6M1510.8 290.8L1513.7 307.3L1508.0 323.5L1510.8 339.2M1513.7 307.3L1530.7 310.6L1539.3 317.0L1530.7 333.0L1525.1 342.4M1519.4 277.2L1530.7 290.8L1539.3 297.4L1547.8 296.1M1516.5 223.2L1530.7 219.4L1542.1 207.8L1556.3 191.8L1562.0 166.8M1541.0 179.5L1550.6 187.7L1564.9 199.9L1579.1 215.5L1587.6 223.2M1550.6 187.7L1567.7 171.1L1584.8 153.7M1448.3 350.4L1462.5 339.2L1482.4 326.6M1284.0 297.4L1294.8 304.0L1306.2 300.7L1315.8 312.5M1273.7 304.0L1283.4 317.0L1297.6 329.8L1309.0 339.2L1326.1 342.4L1340.3 339.2L1361.3 354.1M1263.5 339.9L1274.9 342.4L1283.4 351.6L1291.9 357.8L1311.8 357.8L1328.9 354.7L1340.3 339.2M1273.7 364.5L1286.2 366.9L1303.3 369.9L1317.5 372.9L1337.4 375.9M1280.6 393.8L1294.8 390.8L1303.3 390.8L1317.5 384.9M1285.1 411.9L1294.8 408.4L1306.2 411.4L1314.7 405.5M1293.6 427.0L1298.8 417.2L1294.8 408.4M1328.9 354.7L1337.4 366.9L1337.4 375.9M1593.3 568.7L1593.3 599.1M1644.5 575.2L1644.5 599.1M945.1 -21.5L950.8 18.2L956.5 36.5" fill="none" stroke="#6e6e6e" stroke-width="1.3" stroke-dasharray="4 3" opacity="0.9"/><path d="M158.7 162.5L318.5 162.5L319.1 159.0L321.9 165.1L333.8 167.6L350.3 171.1L357.2 168.5L377.1 180.3L381.6 183.6L384.5 188.6L390.7 193.4L391.3 211.7L387.3 218.6L399.2 217.1L410.6 213.2L410.0 209.3L419.1 207.0L426.5 202.2L433.9 195.8L453.3 195.8L457.2 192.6L461.8 182.0L466.3 176.1L472.0 177.0L474.3 179.5L474.3 190.2L478.8 195.8M58.1 -21.5L58.1 50.5L69.4 53.9L78.0 65.1L89.3 57.3L100.7 70.6L112.1 91.8L120.6 97.9L117.2 109.9M194.0 287.4L207.6 286.1L228.7 295.4L244.6 295.4L244.6 292.1L254.2 292.1L265.6 306.7L274.1 310.6L282.7 305.3L294.0 320.3L307.1 330.4M335.6 399.7L335.6 394.9L338.4 390.2L345.2 390.2L345.2 380.1L352.6 380.1L357.7 375.9M352.6 380.1L352.6 391.4L358.3 392.6M352.6 391.4L352.0 400.2L347.5 404.3M352.0 400.2L359.4 403.2L360.6 406.1M386.7 396.7L370.8 403.8L363.4 408.4M383.9 420.6L372.5 419.5M390.1 428.2L388.4 436.8M419.7 433.3L416.9 442.0M449.3 419.5L447.6 425.8L445.9 431.6L448.1 437.4L461.8 443.1L476.0 447.7L474.3 457.4L477.1 470.5L478.8 476.2M518.6 434.5L513.0 446.0L514.7 453.4L504.4 460.2L493.1 461.4L495.9 471.6L487.4 478.5L478.8 476.2L462.3 473.3L465.2 489.8L461.8 506.9L445.3 512.6L444.7 525.8L449.3 540.2L458.9 545.9L464.6 545.9L469.7 554.6L467.5 566.3L465.8 578.1M535.1 449.4L532.9 463.1L530.0 471.6L538.5 472.2L549.9 469.9L552.8 450.5M514.7 453.4L519.8 460.2L521.5 474.5L530.0 471.6M549.9 469.9L561.3 469.9L566.4 459.1M410.6 475.6L419.1 478.5L432.2 483.6L441.9 490.4L450.4 496.7L461.8 506.9M403.2 502.3L410.6 511.5L416.3 502.9L427.7 497.2L432.2 483.6M464.6 545.9L484.5 539.0L488.5 548.8L507.3 560.5L518.6 562.2L516.9 572.2L527.2 577.0M849.6 208.5L862.6 214.0L878.0 216.3M809.2 220.1L822.8 220.1L820.6 234.4L817.2 245.5L817.7 254.8M874.0 143.9L883.7 154.6L892.8 158.1L896.2 160.7L906.4 163.3L903.0 174.4L899.0 176.1L893.9 185.3L899.6 188.6L897.3 195.0L899.6 202.2L902.4 205.4M883.7 154.6L887.1 141.1L879.1 141.1M892.8 158.1L893.9 147.5L893.9 137.5L899.6 133.8L900.7 124.4M908.7 173.6L914.4 175.3L919.5 177.0L929.2 173.6L933.7 175.3L928.0 165.1L938.3 164.2L943.4 153.7L945.1 144.8L942.8 135.6L940.5 126.3L941.7 117.7M899.6 188.6L908.1 183.6L913.8 185.3L919.5 183.6L929.2 178.6L937.7 183.6M914.4 175.3L913.8 185.3M929.2 173.6L937.1 165.9L945.1 162.5L955.9 165.9L957.0 171.1L953.6 175.3L950.8 182.0L937.7 183.6M943.4 153.7L952.5 147.5L962.1 153.7L966.7 158.1L957.0 171.1M966.7 158.1L976.4 159.0L988.3 161.6L993.4 140.2L994.0 131.0L992.9 116.7L989.4 112.9L971.2 112.9M957.0 171.1L966.7 171.1L976.4 168.5L984.9 167.6L988.3 161.6M950.8 182.0L953.6 185.3L959.3 188.6L967.8 188.6L975.2 186.9L982.0 182.8L988.9 171.9L984.9 167.6M937.7 183.6L947.9 188.6L953.6 185.3M947.9 188.6L949.6 194.2L955.9 194.2L967.8 196.7L967.8 188.6M949.6 194.2L950.8 199.9L959.3 207.8L964.4 214.8M955.9 194.2L970.7 199.9L969.0 209.3L965.6 211.7M975.2 186.9L982.0 197.5L988.9 200.6L987.2 215.5L988.9 220.1L990.6 225.5L979.2 227.7L976.4 220.9L973.5 214.8L969.0 209.3M988.9 200.6L1002.0 206.2L1013.3 203.8L1022.4 205.4M988.9 220.1L1002.0 224.7L1009.9 220.9L1019.0 219.4M979.2 227.7L976.9 235.2L973.5 236.7M990.6 225.5L999.7 223.2L1009.3 221.7L1011.0 227.7M988.9 171.9L1001.4 173.6L1011.0 169.4L1020.1 171.1L1025.8 179.5L1031.5 187.7M1011.0 169.4L1016.2 177.8L1020.1 191.8L1022.4 205.4M988.3 161.6L986.0 149.3L996.3 147.5L1004.8 136.6L1016.2 139.3L1033.2 142.1L1040.6 134.7L1047.4 132.9L1055.4 143.0L1061.7 150.2L1073.0 151.1L1087.2 157.2L1087.2 171.1L1077.6 177.8M994.0 131.0L996.3 117.7L1004.8 113.8L1011.6 101.0L1020.1 95.9L1033.2 101.0L1037.2 116.7L1040.6 134.7M992.9 116.7L1006.5 114.8L1011.6 101.0L999.1 93.8L979.8 96.9M1011.6 101.0L1017.9 84.5L1015.0 76.0L1017.9 60.7M979.2 81.4L993.4 78.2L1003.1 76.0L1015.0 76.0M1017.9 60.7L1020.1 95.9M1017.9 60.7L1019.0 48.2L1027.5 36.5L1036.1 24.4L1030.4 5.4L1027.5 -21.5M928.0 -21.5L939.4 -5.1L929.2 18.2L928.0 36.5L932.6 44.7L926.9 59.6L924.6 65.1M993.4 -21.5L997.4 -18.7M1007.6 221.7L1019.0 219.4M1095.8 222.4L1107.1 226.2L1114.5 236.7L1114.5 254.8L1100.3 255.5L1087.2 257.7L1075.9 257.7L1067.9 257.7L1064.5 263.3M1086.1 208.5L1098.6 210.1L1110.0 214.0L1124.2 220.9L1135.6 220.9M1107.1 226.2L1115.7 225.5L1124.2 226.2L1124.2 241.8L1132.7 246.2L1137.8 246.2M1114.5 236.7L1124.2 241.8M1062.2 282.0L1063.9 273.1M1062.2 282.0L1069.6 288.8L1080.4 281.3L1092.9 274.5L1100.3 255.5M1080.4 281.3L1081.6 290.8L1070.2 294.1L1058.8 307.3M1058.8 284.0L1061.7 294.1L1058.2 307.3M1092.9 274.5L1081.6 290.8L1098.6 297.4L1114.0 309.3L1124.2 309.9L1132.7 307.3M1114.5 254.8L1118.5 270.3L1121.4 280.6L1129.9 287.4L1132.7 304.0M1124.2 309.9L1132.7 317.0M1172.5 350.4L1155.5 372.9L1161.7 387.3M1150.9 338.6L1155.5 348.6L1172.5 350.4L1175.4 354.7M1175.4 354.7L1155.5 372.9M1105.4 386.7L1124.2 383.1L1138.4 375.3L1155.5 372.9M1172.5 350.4L1180.5 336.7M1137.8 246.2L1149.8 263.3L1166.3 253.4M1166.3 253.4L1183.9 247.6L1202.7 256.2L1207.8 266.1L1204.4 280.6L1206.1 294.1L1210.6 294.8L1216.9 308.6L1209.5 323.5L1210.6 334.8M1206.1 294.1L1216.9 308.6L1226.5 306.7L1237.9 304.7L1240.8 295.4L1255.0 293.4L1260.7 280.6L1264.6 273.8L1266.9 259.1L1283.4 256.2L1287.4 254.8M1207.8 266.1L1218.0 266.8L1227.7 255.5L1237.9 253.4L1246.4 256.2L1255.0 252.7L1266.9 259.1M1287.4 254.8L1285.1 266.8L1281.7 272.4L1283.4 284.0L1284.0 297.4L1273.7 304.0L1263.5 317.0L1259.0 323.5L1255.0 329.8L1263.5 339.9L1249.3 344.8M1285.1 266.8L1302.2 266.8L1309.0 275.1L1307.9 284.0L1311.8 290.8L1320.4 302.7L1315.8 312.5L1334.6 320.9L1343.1 321.5L1360.7 327.3L1361.3 317.7L1365.3 321.5L1370.4 315.8L1381.2 318.3L1383.5 324.1L1370.4 325.4L1365.9 329.8L1363.0 342.4L1361.3 354.1M1383.5 324.1L1394.3 319.6L1402.8 315.8L1412.5 317.0L1408.5 323.5L1400.0 329.8L1395.4 343.6L1390.3 354.7L1385.8 358.4M1383.5 324.1L1384.6 336.1L1381.2 341.1L1385.8 345.5L1385.8 358.4M1315.8 312.5L1326.1 317.7L1334.6 320.9M1135.6 220.9L1125.9 211.7L1129.9 191.8L1138.4 183.6L1132.7 175.3L1127.0 166.8L1124.2 166.8L1129.9 150.2L1146.9 139.3L1161.2 140.2L1176.5 149.3L1192.4 144.8L1209.5 146.6L1206.6 135.6L1201.0 129.1L1209.5 124.4L1212.3 116.7L1229.4 111.9L1246.4 107.0L1261.8 105.0L1277.7 116.7L1293.1 116.7L1300.5 123.5L1314.7 144.8L1328.9 145.7L1337.4 149.3L1346.0 158.1L1356.8 161.6M1161.2 219.4L1178.2 195.8L1192.4 191.0L1206.6 200.6L1212.3 207.8L1226.5 206.2L1235.1 211.7L1235.6 223.2L1249.3 230.0L1255.0 228.5L1263.5 217.1L1277.7 215.5L1283.4 210.1L1294.8 211.7L1315.8 212.4L1315.8 195.8L1328.9 191.8L1331.7 177.8L1346.0 179.5L1346.0 158.1M1166.3 253.4L1161.2 219.4M1202.7 256.2L1212.3 241.8L1223.7 234.4L1235.6 223.2M1237.9 253.4L1243.6 241.8L1249.3 230.0M1255.0 252.7L1260.7 245.5L1260.7 234.4L1269.2 233.0L1278.3 238.1L1285.1 230.7L1294.8 230.7L1303.3 225.5L1315.8 212.4M1266.9 259.1L1277.7 245.5L1285.1 244.7L1278.3 238.1M1356.8 161.6L1364.7 158.1L1377.2 151.9L1385.8 146.6L1397.1 153.7L1415.9 158.1L1418.2 140.2L1431.2 135.6L1442.6 140.2L1456.8 149.3L1471.0 151.9L1485.3 160.7L1502.3 154.6L1513.7 153.7L1522.8 155.5L1530.7 155.5M1356.8 161.6L1373.2 172.8L1376.1 187.7L1388.6 195.8L1402.8 201.4L1408.5 214.0L1431.2 214.8L1456.8 223.2L1471.0 216.3L1488.1 214.8L1496.6 205.4L1510.8 192.6L1522.2 185.3L1532.5 182.0L1541.0 179.5L1530.7 155.5M1315.8 195.8L1313.5 219.4L1300.5 227.0L1285.1 230.7M1287.4 254.8L1297.6 263.3M1530.7 155.5L1539.3 149.3L1546.7 131.0L1559.2 122.5L1576.2 128.2L1584.8 153.7L1601.8 163.3L1613.2 172.8L1625.7 168.5L1621.2 187.7L1607.5 196.7L1604.7 207.8L1603.0 216.3M1566.6 235.2L1576.2 228.5L1587.6 223.2L1593.3 219.4L1603.0 216.3M1571.1 249.1L1580.2 249.8L1584.8 246.9L1589.9 244.7M1412.5 317.0L1419.9 320.3L1421.0 333.0L1415.9 342.4L1425.6 354.7L1435.2 357.8L1440.9 352.3L1448.3 350.4L1456.8 348.6L1465.4 352.9L1473.9 357.2M1435.2 357.8L1429.0 364.5L1431.2 369.9L1435.2 381.9L1442.6 379.5L1455.7 387.9L1460.2 396.7L1459.1 401.4L1445.5 400.8L1443.2 413.1M1455.7 387.9L1465.4 387.9L1471.0 396.7L1471.6 408.4L1463.7 414.3L1456.8 420.1L1453.4 423.5M1440.9 352.3L1439.8 360.8L1445.5 366.9L1454.0 369.9L1458.0 375.9L1465.4 384.9L1471.0 396.7M1429.0 364.5L1421.6 368.7L1415.9 375.9L1414.2 384.9L1419.9 396.7L1422.7 408.4L1420.4 423.0M1434.1 446.0L1438.1 450.0L1440.3 447.7M1483.0 472.2L1490.9 477.3L1499.5 474.5L1510.8 474.5L1516.5 463.1L1527.9 459.1M1661.5 497.8L1661.5 521.8L1662.7 535.0M849.6 270.3L853.0 287.4L839.9 293.4L831.4 300.7L810.3 312.5L810.3 321.5M810.3 319.0L784.7 319.0M810.3 321.5L810.3 329.8L791.6 329.8L791.6 345.5L785.9 359.0L763.1 359.0M832.5 336.1L825.7 336.7L829.7 388.4L828.5 393.8L794.4 393.8L790.4 398.5L765.4 387.3M832.5 336.1L866.6 360.8L878.6 372.9L884.2 371.7L892.8 370.5L902.4 361.4L928.0 345.5M908.7 257.0L906.4 273.1L902.4 280.6L911.5 290.1L913.8 302.7L917.8 313.8L915.5 326.6L917.8 336.1L925.8 337.4L928.0 345.5M924.1 282.7L917.8 290.8L916.7 300.7L913.8 302.7M928.0 345.5L945.1 348.6L996.3 369.9L996.3 366.9L1002.0 366.9L1002.0 354.7L1002.0 293.4M1002.0 354.7L1037.8 354.7L1069.6 354.7M884.2 371.7L883.7 388.4L880.3 393.8L867.2 394.9L860.9 397.3L857.0 396.1L850.1 399.7L839.9 406.1L835.4 410.2L828.5 423.5L816.6 423.0L813.2 420.1L812.0 414.3L802.9 413.1L795.0 411.9L790.4 398.5M945.1 348.6L947.9 362.0L950.8 375.9L947.9 387.9L937.1 404.3L930.9 406.7L916.7 407.3L904.2 406.7L891.1 403.2L880.3 416.0L875.7 411.9L872.3 410.8L865.5 406.7L860.9 397.3M996.3 369.9L995.7 393.2L987.2 402.6L984.9 410.2L989.4 420.1L981.5 424.1L973.5 431.6L965.6 437.4L954.2 440.2L947.9 439.7L942.2 425.8L945.1 417.2L940.0 408.4L937.1 404.3M1069.6 354.7L1074.7 378.9L1078.7 383.7L1067.3 400.8L1056.0 414.3L1053.1 424.1L1047.4 431.6L1050.3 439.1L1058.8 451.7L1053.1 459.1L1047.4 462.5L1034.9 463.1L1024.7 458.0L1016.2 453.4L1007.6 446.0L997.4 433.9L993.4 425.8L989.4 420.1M997.4 433.9L1016.2 428.7L1030.4 424.1L1047.4 414.3L1056.0 414.3M1067.3 400.8L1073.0 400.8L1081.6 399.1L1090.1 399.7L1100.9 411.4M1100.9 411.4L1097.5 420.1L1103.2 420.6L1110.0 431.6L1131.6 437.4L1115.7 454.5L1107.1 455.7L1098.6 460.2L1092.9 460.8L1084.4 463.7L1075.9 462.5L1064.5 457.4L1058.8 451.7M1092.9 460.8L1092.9 492.7M1047.4 462.5L1053.1 476.2L1052.6 488.7L1073.0 500.1L1082.7 509.8M1028.1 491.0L1033.2 488.7L1033.2 496.7L1024.7 498.9M1052.6 488.7L1033.2 488.7L1028.1 491.0L1028.1 480.2L1030.4 474.5L1036.1 469.3L1034.9 463.1M1024.7 498.9L1026.4 508.6L1030.4 517.2L1034.9 530.4M1034.9 530.4L1046.9 536.7L1056.0 545.9L1089.5 543.0M764.8 405.5L781.3 406.1L795.0 411.9M781.9 410.2L774.5 414.3L764.8 411.9M784.2 429.9L797.3 425.8L801.2 434.5L795.5 444.2M801.2 434.5L811.5 439.7L817.2 458.0M813.2 420.1L811.5 424.1L814.3 434.5L814.3 440.2L817.2 458.0M828.5 423.5L842.7 423.0L843.9 431.6L841.6 448.8L843.9 454.5M839.9 406.1L857.0 420.1L864.9 420.1L872.3 410.8M857.0 420.1L859.8 434.5L866.1 448.2M864.9 420.1L868.9 431.6L870.0 447.7M868.9 431.6L880.3 416.0M875.2 446.5L875.7 431.6L880.3 416.0M908.1 456.8L913.8 446.0L925.2 443.1L930.9 434.5L936.6 425.8L942.2 414.3L940.0 408.4M947.9 439.7L945.1 448.8L942.2 457.4L950.8 470.5L953.6 463.1L965.0 459.1L976.4 457.4L987.7 459.1L996.3 453.4L1004.8 454.5L1016.2 453.4M915.5 470.5L924.1 470.5L933.7 470.5L950.8 470.5M924.1 470.5L924.1 477.3L913.8 477.3M933.7 470.5L942.2 485.8L935.4 494.4L928.0 497.2L923.5 504.6M950.8 470.5L961.0 484.7L953.6 500.1L945.1 508.6L930.9 511.5L929.2 516.0M929.2 516.0L936.6 517.2L953.6 517.2L959.3 528.6L970.7 522.9L983.8 524.6L982.0 537.8L986.0 545.9L996.3 545.9L996.3 557.6L984.9 557.6L984.9 578.1M1034.9 530.4L1021.9 531.5L1021.9 545.9L1024.7 554.6L1015.0 551.7L996.3 545.9M1046.9 536.7L1048.6 548.8L1048.6 560.5L1036.1 563.4L1030.4 572.2L1021.9 578.1M1056.0 545.9L1058.8 560.5L1063.4 566.3L1061.7 578.1" fill="none" stroke="#555" stroke-width="1.3" stroke-linejoin="round" opacity="0.9"/><line x1="0" y1="483" x2="1820" y2="483" stroke="#6d5f61" stroke-width="2.2" stroke-dasharray="12 4" stroke-dashoffset="2"/><g font-family="Liberation Sans" font-size="23" fill="#2c6b80" letter-spacing="4.3"><text x="631" y="267.3" text-anchor="middle">Oceano Atlantico</text><text x="631" y="292.7" text-anchor="middle">settentrionale</text><text x="-1.6" y="255.5">co</text><text x="-0.5" y="281.4">e</text></g><path d="M0 513.5L15 549.6M1 550.6H12.5" fill="none" stroke="#6b4f55" stroke-width="1.6" stroke-dasharray="9 3"/><g font-family="Liberation Sans" font-weight="bold" font-size="17" fill="#1f1f1f" text-anchor="middle" stroke="#ffffff" stroke-width="5" stroke-opacity="0.92" stroke-linejoin="round" paint-order="stroke" style="paint-order:stroke"><text x="957" y="5">Svezia</text><text x="909" y="48">Norvegia</text><text x="1396" y="34">Russia</text><text x="839" y="102">Regno Unito</text><text x="270" y="116">Canada</text><text x="968" y="133">Polonia</text><text x="920" y="163">Germania</text><text x="1046" y="161">Ucraina</text><text x="1245" y="175">Kazakistan</text><text x="1449" y="187">Mongolia</text><text x="875" y="193">Francia</text><text x="931" y="214">Italia</text><text x="842" y="226">Spagna</text><text x="285" y="242">Stati Uniti</text><text x="1064" y="247">Turchia</text><text x="1584" y="258">Corea</text><text x="1585" y="275">del Sud</text><text x="1660" y="245">Giappone</text><text x="1452" y="259">Cina</text><text x="1106" y="290">Iraq</text><text x="1171" y="299">Iran</text><text x="1248" y="281">Afghanistan</text><text x="1253" y="317">Pakistan</text><text x="871" y="321">Algeria</text><text x="963" y="329">Libia</text><text x="1031" y="320">Egitto</text><text x="1120" y="342">Arabia</text><text x="1120" y="360">Saudita</text><text x="278" y="350">Messico</text><text x="1315" y="355">India</text><text x="1437" y="373">Thailandia</text><text x="852" y="386">Mali</text><text x="919" y="386">Niger</text><text x="1034" y="391">Sudan</text><text x="973" y="409">Ciad</text><text x="908" y="434">Nigeria</text><text x="1088" y="440">Etiopia</text><text x="485" y="442">Venezuela</text><text x="429" y="467">Colombia</text><text x="1078" y="486">Kenya</text><text x="1522" y="512">Indonesia</text><text x="1699" y="507">Papua</text><text x="1699" y="526">Nuova</text><text x="1699" y="543">Guinea</text><text x="1074" y="525">Tanzania</text><text x="545" y="539">Brasile</text><text x="427" y="552">Perù</text><text x="956" y="560">Angola</text><text x="488" y="582">Bolivia</text></g><defs><clipPath id="mkt"><rect x="-40" y="-40" width="80" height="34.5"/></clipPath><clipPath id="mkb"><rect x="-40" y="6" width="80" height="34"/></clipPath><clipPath id="mdt"><rect x="-10" y="-10" width="20" height="11.5"/></clipPath></defs><g transform="translate(439,192)"><circle r="30" fill="none" stroke="#343434" stroke-width="10" clip-path="url(#mkt)"/><circle r="30" fill="none" stroke="#b22624" stroke-width="10" clip-path="url(#mkb)"/><circle r="9" fill="#343434"/><circle r="9" fill="#b22624" clip-path="url(#mdt)"/></g><g transform="translate(912,156)"><circle r="30" fill="none" stroke="#343434" stroke-width="10" clip-path="url(#mkt)"/><circle r="30" fill="none" stroke="#b22624" stroke-width="10" clip-path="url(#mkb)"/><circle r="9" fill="#343434"/><circle r="9" fill="#b22624" clip-path="url(#mdt)"/></g><g transform="translate(1654,229)"><circle r="30" fill="none" stroke="#343434" stroke-width="10" clip-path="url(#mkt)"/><circle r="30" fill="none" stroke="#b22624" stroke-width="10" clip-path="url(#mkb)"/><circle r="9" fill="#343434"/><circle r="9" fill="#b22624" clip-path="url(#mdt)"/></g><g transform="translate(1451,438)"><circle r="30" fill="none" stroke="#343434" stroke-width="10" clip-path="url(#mkt)"/><circle r="30" fill="none" stroke="#b22624" stroke-width="10" clip-path="url(#mkb)"/><circle r="9" fill="#343434"/><circle r="9" fill="#b22624" clip-path="url(#mdt)"/></g>
</svg><!--/MAP-->
</div>

<!--CTRL-->
<div class="abs mtype"><div class="mt1">Mappa</div><div class="mt2">Satellite</div></div>
<div class="abs fs"><svg width="80" height="80" viewBox="0 0 80 80"><path d="M22 34V22h12M46 22h12v12M58 46v12H46M34 58H22V46" fill="none" stroke="#5c5c5c" stroke-width="4"/></svg></div>
<div class="abs pan"><svg width="80" height="80" viewBox="0 0 80 80"><path d="M31.5 27L40 18.5L48.5 27M31.5 52L40 60.5L48.5 52M26 31.5L17.5 40L26 48.5M54 31.5L62.5 40L54 48.5" fill="none" stroke="#666" stroke-width="4.4"/></svg></div>
<div class="abs peg"><svg width="80" height="80" viewBox="0 0 80 80"><circle cx="39" cy="20" r="10.5" fill="#f6b93d" stroke="#6a6a6a" stroke-width="1.6"/><path d="M27 31h24l4 4 5 13-3 2-5-11v29h-9V55h-2v13h-9V39l-5 11-3-2 5-13z" fill="#f6b93d" stroke="#6a6a6a" stroke-width="1.6" stroke-linejoin="round"/><path d="M30 32h18l-9 11z" fill="#e0883a"/></svg></div>
<div class="abs help">?</div>
<div class="abs foot"><span style="left:10px">Scorciatoie da tastiera</span><i style="left:221px"></i><span style="left:232px">Dati mappa ©2025</span><i style="left:412px"></i><span style="left:424px">Termini</span></div>
<div class="abs glogo"><svg width="130" height="48" viewBox="0 0 130 48"><g font-family="Liberation Sans" font-size="42" stroke="#c6e9f3" stroke-width="5" stroke-linejoin="round" paint-order="stroke" style="paint-order:stroke"><text transform="translate(9 36) scale(0.86 1)" fill="#4285f4">G</text><text transform="translate(38 36) scale(0.86 1)" fill="#ea4335">o</text><text transform="translate(58 36) scale(0.86 1)" fill="#fbbc05">o</text><text transform="translate(77 36) scale(0.86 1)" fill="#4285f4">g</text><text transform="translate(97 36) scale(0.86 1)" fill="#34a853">l</text><text transform="translate(104 36) scale(0.86 1)" fill="#ea4335">e</text></g></svg></div>
<div class="abs" style="left:1984px;top:1404px;width:14px;height:14px;background:#c8c8c8"><div style="width:14px;height:14px;background:#f8f9fb;border-bottom-right-radius:14px"></div></div>
<!--/CTRL-->
</body></html>
